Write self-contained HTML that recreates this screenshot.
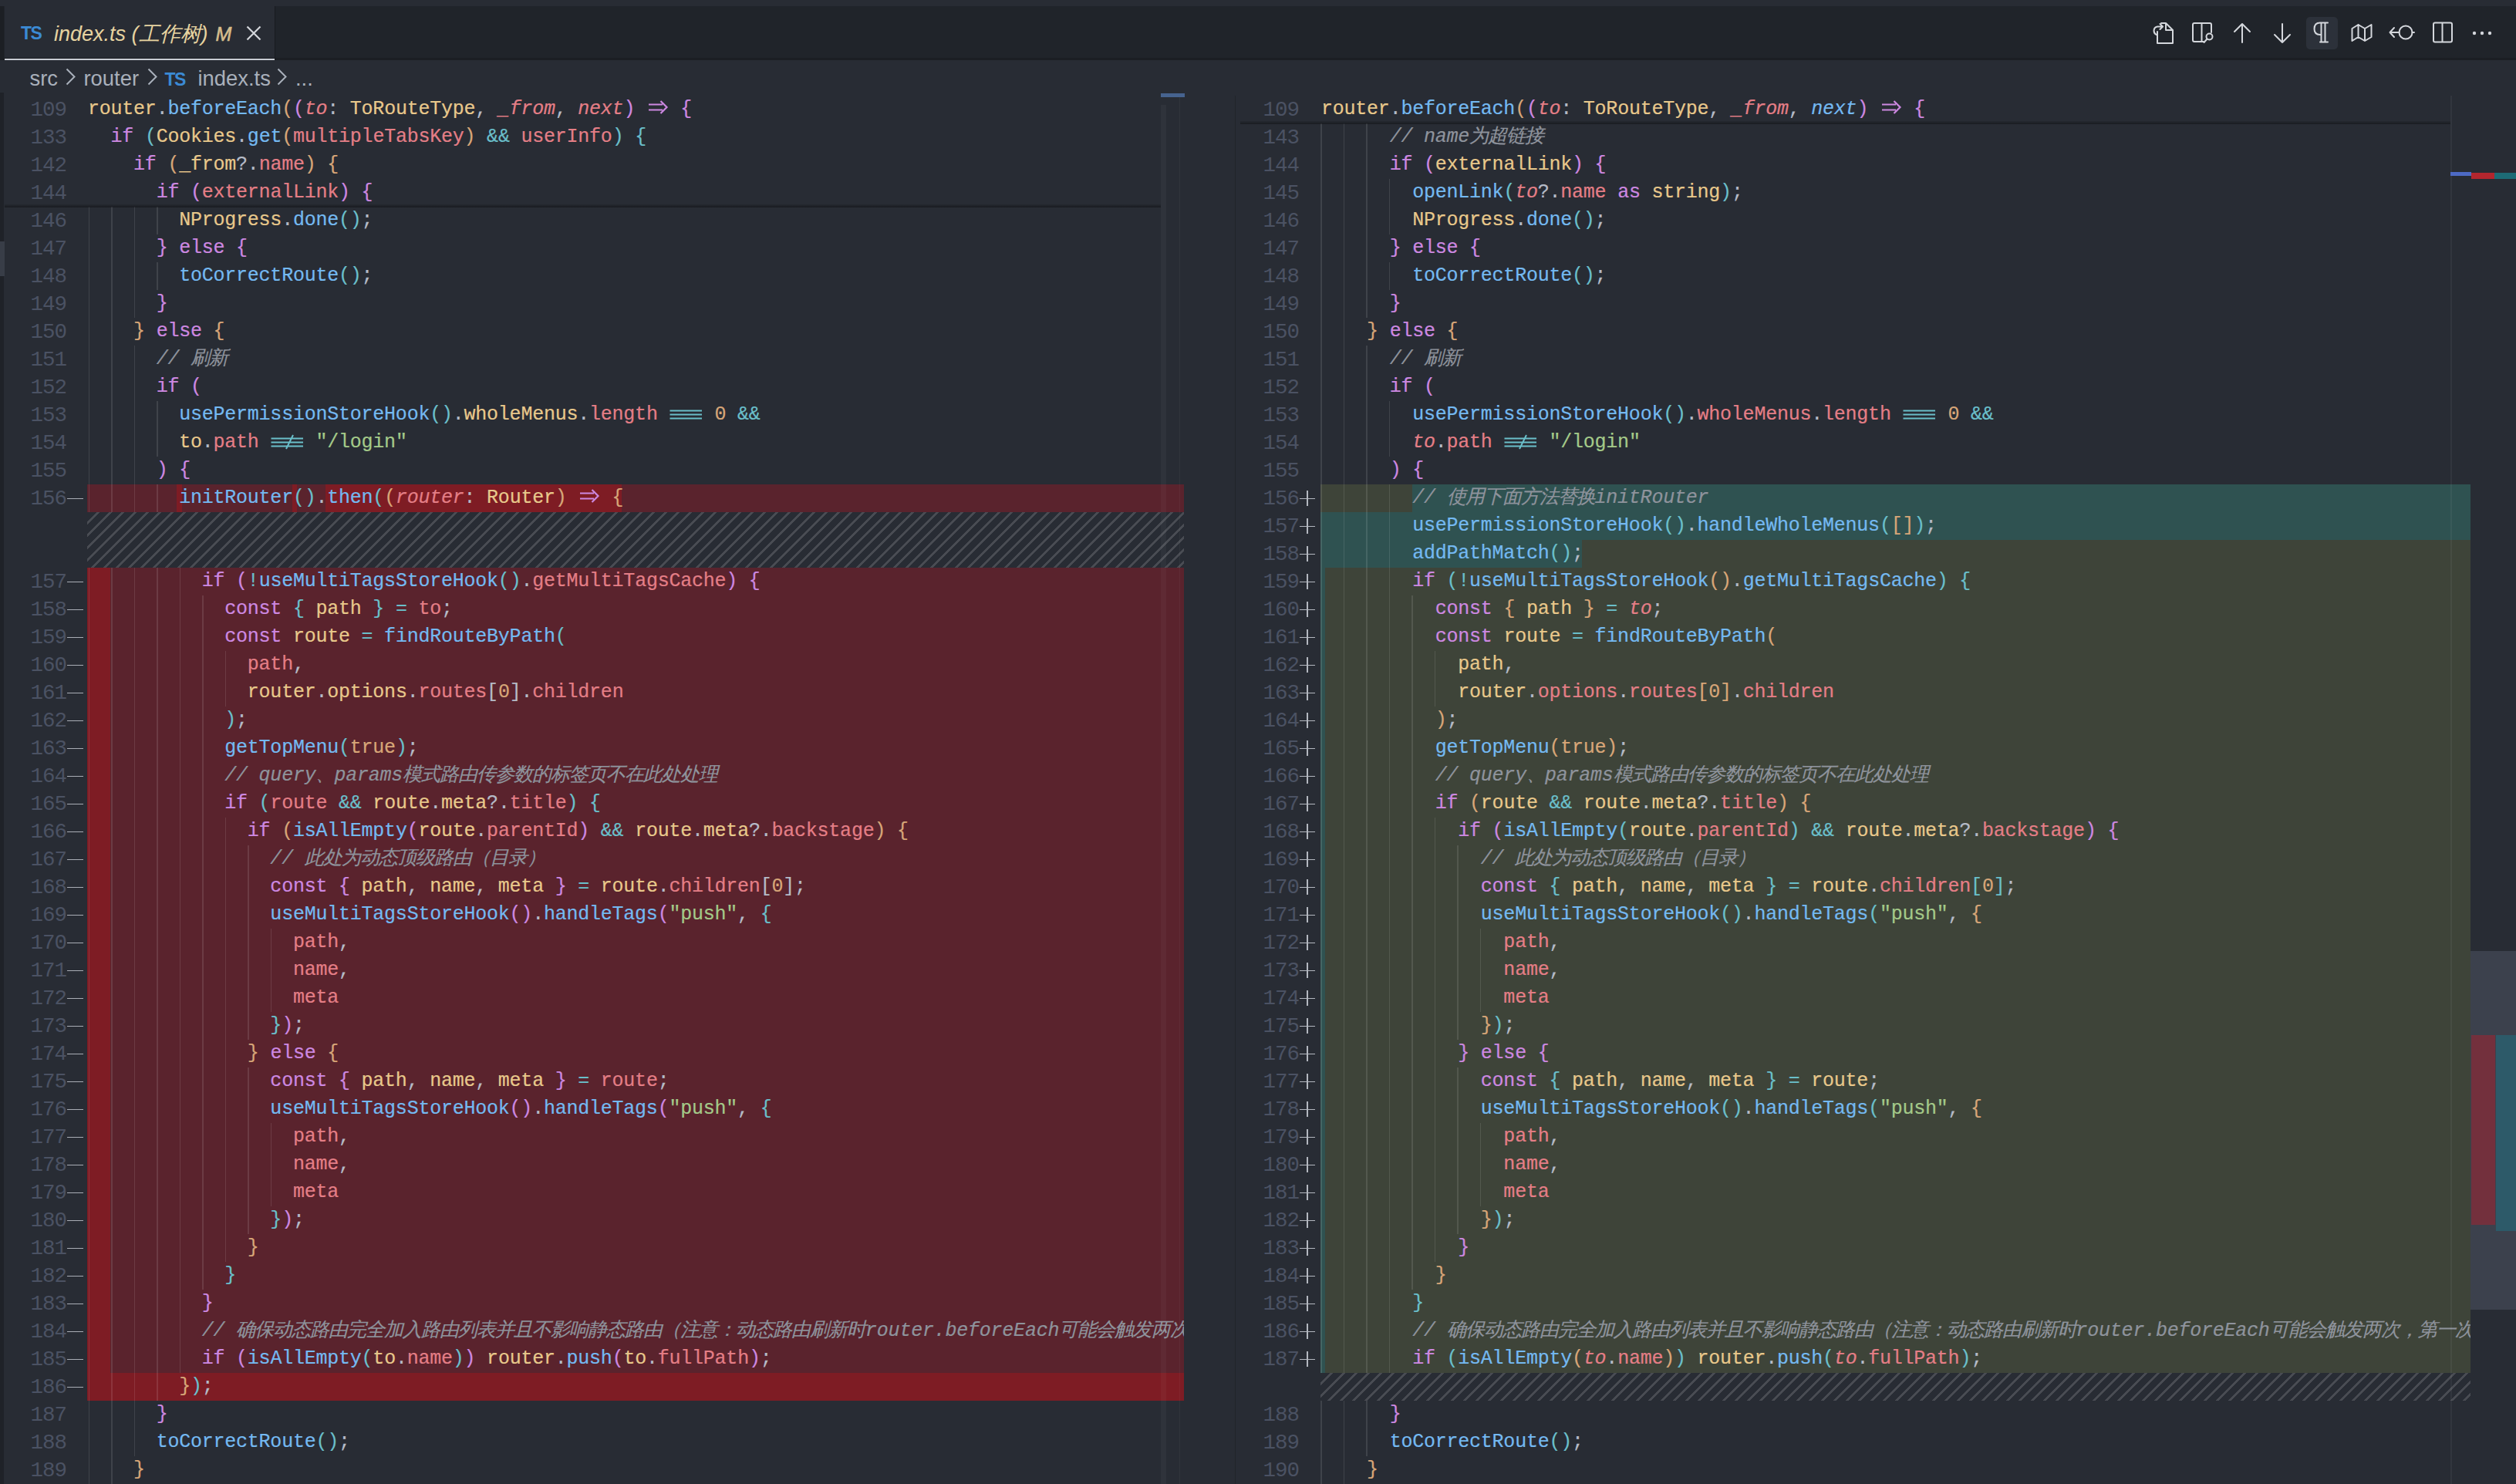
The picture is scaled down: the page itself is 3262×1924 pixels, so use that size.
<!DOCTYPE html><html><head><meta charset="utf-8"><style>
*{margin:0;padding:0;box-sizing:border-box}
html,body{width:3262px;height:1924px;overflow:hidden;background:#282c34}
body{position:relative;font-family:"Liberation Sans",sans-serif}
.abs{position:absolute}
.row{position:absolute;height:36px;line-height:32.7px;white-space:pre;overflow:hidden;font-family:"Liberation Mono",monospace;font-size:25px;letter-spacing:-0.230px;color:#b5bbc7}
.ln{position:absolute;height:36px;line-height:38px;white-space:pre;font-family:"Liberation Mono",monospace;font-size:25px;color:#495162;text-align:right}
.k{color:#cd88e1}.b{color:#74b9f1}.y{color:#e8c88b}.r{color:#e47e86}.i{color:#e47e86;font-style:italic}
.o{color:#d7a678}.c{color:#6abfca}.g{color:#a4ca89}.w{color:#b5bbc7}.m{color:#8e939c;font-style:italic}.n{color:#74b9f1;font-style:italic}.z{letter-spacing:-1px}.L{display:inline-block;width:29.54px;letter-spacing:0;text-align:center}
.hatch{background-color:#282c34;background-image:linear-gradient(-45deg,rgba(204,204,204,.2) 11%,transparent 11%,transparent 50%,rgba(204,204,204,.2) 50%,rgba(204,204,204,.2) 61%,transparent 61%,transparent 100%);background-size:16px 16px}
.guide{position:absolute;width:2px;background:#363b43}

.row{line-height:35.5px;-webkit-text-stroke:0.2px currentColor}
.ln{line-height:38px;font-size:27.5px;letter-spacing:-1px;color:#4b5263}
.guide{background:rgba(255,255,255,0.11);width:1.5px}
.tabt{position:absolute;white-space:pre;font-family:"Liberation Sans",sans-serif;font-size:27px;line-height:36px}
</style></head><body>
<div class="abs" style="left:0px;top:0px;width:3262px;height:8px;background:#282c34;"></div>
<div class="abs" style="left:0px;top:8px;width:3262px;height:70px;background:#20242a;"></div>
<div class="abs" style="left:0px;top:75px;width:3262px;height:3px;background:#1b1e23;"></div>
<div class="abs" style="left:6px;top:8px;width:350px;height:67px;background:#282c34;"></div>
<div class="abs" style="left:356px;top:8px;width:1px;height:70px;background:#181a1f;"></div>
<div class="abs" style="left:6px;top:76px;width:350px;height:2px;background:#c8ccd3;"></div>
<div class="tabt" style="left:27px;top:25px;font-weight:bold;font-size:23px;color:#3b8ad4;letter-spacing:-1.5px">TS</div>
<div class="tabt" style="left:70px;top:26px;font-style:italic;color:#e6d3a0">index.ts (工作树)</div>
<div class="tabt" style="left:279.5px;top:25.5px;font-style:italic;color:#d5bd8c;font-size:25px;-webkit-text-stroke:0.6px currentColor">M</div>
<svg class="abs" style="left:318px;top:32px" width="22" height="22" viewBox="0 0 22 22"><path d="M2.5 2.5 L19.5 19.5 M19.5 2.5 L2.5 19.5" stroke="#d4d7dc" stroke-width="2.2"/></svg>
<svg class="abs" style="left:0;top:0" width="3262" height="80" viewBox="0 0 3262 80"><rect x="2990" y="22" width="41" height="42" rx="5" fill="#2c313a"/><path d="M2802 30 H2808 L2817 39 V56 H2797 V41 M2808 30 V39 H2817" fill="none" stroke="#d4d7dc" stroke-width="2" stroke-linecap="round" stroke-linejoin="round"/><path d="M2796 45 C2791.5 43.5 2791 35.5 2797 34.5 H2803.5 M2800.5 31 L2804 34.5 L2800.5 38" fill="none" stroke="#d4d7dc" stroke-width="2" stroke-linecap="round" stroke-linejoin="round"/><path d="M2857 54 H2845 Q2843 54 2843 52 V32 Q2843 30 2845 30 H2865 Q2867 30 2867 32 V42 M2854.5 30 V54" fill="none" stroke="#d4d7dc" stroke-width="2" stroke-linecap="round" stroke-linejoin="round"/><circle cx="2864.5" cy="47.5" r="4" fill="none" stroke="#d4d7dc" stroke-width="2" stroke-linecap="round" stroke-linejoin="round"/><path d="M2861.5 50.5 L2857.5 55" fill="none" stroke="#d4d7dc" stroke-width="2" stroke-linecap="round" stroke-linejoin="round"/><path d="M2907 31 V55 M2897 41 L2907 31 L2917 41" fill="none" stroke="#d4d7dc" stroke-width="2" stroke-linecap="round" stroke-linejoin="round"/><path d="M2959 31 V55 M2949 45 L2959 55 L2969 45" fill="none" stroke="#d4d7dc" stroke-width="2" stroke-linecap="round" stroke-linejoin="round"/><path d="M3018 29.5 H3008 C3002 29.5 3000.5 33 3000.5 37.5 C3000.5 42 3003 45 3008 45 M3009.5 29.5 V54.5 M3014.5 29.5 V54.5 M3008 54.5 H3018" fill="none" stroke="#d4d7dc" stroke-width="2" stroke-linecap="round" stroke-linejoin="round"/><path d="M3049.5 37 L3057.5 32 L3066 37 L3074.5 32 V48 L3066 53 L3057.5 48 L3049.5 53 Z M3057.5 32 V48 M3066 37 V53" fill="none" stroke="#d4d7dc" stroke-width="2" stroke-linecap="round" stroke-linejoin="round"/><circle cx="3119" cy="42" r="8.5" fill="none" stroke="#d4d7dc" stroke-width="2" stroke-linecap="round" stroke-linejoin="round"/><path d="M3110.5 42 H3098.5 M3104 36 L3098.5 42 L3104 48 M3127.5 42 H3130" fill="none" stroke="#d4d7dc" stroke-width="2" stroke-linecap="round" stroke-linejoin="round"/><path d="M3157 29.5 H3177 Q3179 29.5 3179 31.5 V52.5 Q3179 54.5 3177 54.5 H3157 Q3155 54.5 3155 52.5 V31.5 Q3155 29.5 3157 29.5 Z M3166.5 29.5 V54.5" fill="none" stroke="#d4d7dc" stroke-width="2" stroke-linecap="round" stroke-linejoin="round"/><circle cx="3208" cy="43" r="2.2" fill="#d4d7dc"/><circle cx="3218" cy="43" r="2.2" fill="#d4d7dc"/><circle cx="3228" cy="43" r="2.2" fill="#d4d7dc"/></svg>
<div class="tabt" style="left:38.5px;top:83.5px;color:#a9b0bb;font-size:27.4px">src</div>
<svg class="abs" style="left:85px;top:88px" width="14" height="24" viewBox="0 0 14 24"><path d="M1.5 1.5 L11.5 11.5 L1.5 21.5" fill="none" stroke="#a9b0bb" stroke-width="2"/></svg>
<div class="tabt" style="left:108.5px;top:83.5px;color:#a9b0bb;font-size:27.4px">router</div>
<svg class="abs" style="left:191px;top:88px" width="14" height="24" viewBox="0 0 14 24"><path d="M1.5 1.5 L11.5 11.5 L1.5 21.5" fill="none" stroke="#a9b0bb" stroke-width="2"/></svg>
<div class="tabt" style="left:213.5px;top:84.5px;font-weight:bold;font-size:23px;color:#3b8ad4;letter-spacing:-1.5px">TS</div>
<div class="tabt" style="left:256.5px;top:83.5px;color:#a9b0bb;font-size:27.4px">index.ts</div>
<svg class="abs" style="left:359px;top:88px" width="14" height="24" viewBox="0 0 14 24"><path d="M1.5 1.5 L11.5 11.5 L1.5 21.5" fill="none" stroke="#a9b0bb" stroke-width="2"/></svg>
<div class="tabt" style="left:383px;top:83.5px;color:#a9b0bb;font-size:27.4px">...</div>
<div class="abs" style="left:0px;top:8px;width:5px;height:67px;background:#1c1f24;"></div>
<div class="abs" style="left:0px;top:120px;width:5px;height:1804px;background:#1f2228;"></div>
<div class="abs" style="left:0px;top:313px;width:6px;height:45px;background:#383d47;"></div>
<div class="abs" style="left:113px;top:628px;width:1422px;height:36px;background:#5a232d;"></div>
<div class="abs" style="left:229px;top:628px;width:7px;height:36px;background:#7e1c24;"></div>
<div class="abs" style="left:379px;top:628px;width:6px;height:36px;background:#7e1c24;"></div>
<div class="abs" style="left:422px;top:628px;width:384px;height:36px;background:#7e1c24;"></div>
<div class="abs" style="left:113px;top:736px;width:1422px;height:36px;background:#5a232d;"></div>
<div class="abs" style="left:113px;top:736px;width:30px;height:36px;background:#7e1c24;"></div>
<div class="abs" style="left:113px;top:772px;width:1422px;height:36px;background:#5a232d;"></div>
<div class="abs" style="left:113px;top:772px;width:30px;height:36px;background:#7e1c24;"></div>
<div class="abs" style="left:113px;top:808px;width:1422px;height:36px;background:#5a232d;"></div>
<div class="abs" style="left:113px;top:808px;width:30px;height:36px;background:#7e1c24;"></div>
<div class="abs" style="left:113px;top:844px;width:1422px;height:36px;background:#5a232d;"></div>
<div class="abs" style="left:113px;top:844px;width:30px;height:36px;background:#7e1c24;"></div>
<div class="abs" style="left:113px;top:880px;width:1422px;height:36px;background:#5a232d;"></div>
<div class="abs" style="left:113px;top:880px;width:30px;height:36px;background:#7e1c24;"></div>
<div class="abs" style="left:113px;top:916px;width:1422px;height:36px;background:#5a232d;"></div>
<div class="abs" style="left:113px;top:916px;width:30px;height:36px;background:#7e1c24;"></div>
<div class="abs" style="left:113px;top:952px;width:1422px;height:36px;background:#5a232d;"></div>
<div class="abs" style="left:113px;top:952px;width:30px;height:36px;background:#7e1c24;"></div>
<div class="abs" style="left:113px;top:988px;width:1422px;height:36px;background:#5a232d;"></div>
<div class="abs" style="left:113px;top:988px;width:30px;height:36px;background:#7e1c24;"></div>
<div class="abs" style="left:113px;top:1024px;width:1422px;height:36px;background:#5a232d;"></div>
<div class="abs" style="left:113px;top:1024px;width:30px;height:36px;background:#7e1c24;"></div>
<div class="abs" style="left:113px;top:1060px;width:1422px;height:36px;background:#5a232d;"></div>
<div class="abs" style="left:113px;top:1060px;width:30px;height:36px;background:#7e1c24;"></div>
<div class="abs" style="left:113px;top:1096px;width:1422px;height:36px;background:#5a232d;"></div>
<div class="abs" style="left:113px;top:1096px;width:30px;height:36px;background:#7e1c24;"></div>
<div class="abs" style="left:113px;top:1132px;width:1422px;height:36px;background:#5a232d;"></div>
<div class="abs" style="left:113px;top:1132px;width:30px;height:36px;background:#7e1c24;"></div>
<div class="abs" style="left:113px;top:1168px;width:1422px;height:36px;background:#5a232d;"></div>
<div class="abs" style="left:113px;top:1168px;width:30px;height:36px;background:#7e1c24;"></div>
<div class="abs" style="left:113px;top:1204px;width:1422px;height:36px;background:#5a232d;"></div>
<div class="abs" style="left:113px;top:1204px;width:30px;height:36px;background:#7e1c24;"></div>
<div class="abs" style="left:113px;top:1240px;width:1422px;height:36px;background:#5a232d;"></div>
<div class="abs" style="left:113px;top:1240px;width:30px;height:36px;background:#7e1c24;"></div>
<div class="abs" style="left:113px;top:1276px;width:1422px;height:36px;background:#5a232d;"></div>
<div class="abs" style="left:113px;top:1276px;width:30px;height:36px;background:#7e1c24;"></div>
<div class="abs" style="left:113px;top:1312px;width:1422px;height:36px;background:#5a232d;"></div>
<div class="abs" style="left:113px;top:1312px;width:30px;height:36px;background:#7e1c24;"></div>
<div class="abs" style="left:113px;top:1348px;width:1422px;height:36px;background:#5a232d;"></div>
<div class="abs" style="left:113px;top:1348px;width:30px;height:36px;background:#7e1c24;"></div>
<div class="abs" style="left:113px;top:1384px;width:1422px;height:36px;background:#5a232d;"></div>
<div class="abs" style="left:113px;top:1384px;width:30px;height:36px;background:#7e1c24;"></div>
<div class="abs" style="left:113px;top:1420px;width:1422px;height:36px;background:#5a232d;"></div>
<div class="abs" style="left:113px;top:1420px;width:30px;height:36px;background:#7e1c24;"></div>
<div class="abs" style="left:113px;top:1456px;width:1422px;height:36px;background:#5a232d;"></div>
<div class="abs" style="left:113px;top:1456px;width:30px;height:36px;background:#7e1c24;"></div>
<div class="abs" style="left:113px;top:1492px;width:1422px;height:36px;background:#5a232d;"></div>
<div class="abs" style="left:113px;top:1492px;width:30px;height:36px;background:#7e1c24;"></div>
<div class="abs" style="left:113px;top:1528px;width:1422px;height:36px;background:#5a232d;"></div>
<div class="abs" style="left:113px;top:1528px;width:30px;height:36px;background:#7e1c24;"></div>
<div class="abs" style="left:113px;top:1564px;width:1422px;height:36px;background:#5a232d;"></div>
<div class="abs" style="left:113px;top:1564px;width:30px;height:36px;background:#7e1c24;"></div>
<div class="abs" style="left:113px;top:1600px;width:1422px;height:36px;background:#5a232d;"></div>
<div class="abs" style="left:113px;top:1600px;width:30px;height:36px;background:#7e1c24;"></div>
<div class="abs" style="left:113px;top:1636px;width:1422px;height:36px;background:#5a232d;"></div>
<div class="abs" style="left:113px;top:1636px;width:30px;height:36px;background:#7e1c24;"></div>
<div class="abs" style="left:113px;top:1672px;width:1422px;height:36px;background:#5a232d;"></div>
<div class="abs" style="left:113px;top:1672px;width:30px;height:36px;background:#7e1c24;"></div>
<div class="abs" style="left:113px;top:1708px;width:1422px;height:36px;background:#5a232d;"></div>
<div class="abs" style="left:113px;top:1708px;width:30px;height:36px;background:#7e1c24;"></div>
<div class="abs" style="left:113px;top:1744px;width:1422px;height:36px;background:#5a232d;"></div>
<div class="abs" style="left:113px;top:1744px;width:30px;height:36px;background:#7e1c24;"></div>
<div class="abs" style="left:113px;top:1780px;width:1422px;height:36px;background:#5a232d;"></div>
<div class="abs" style="left:113px;top:1780px;width:1422px;height:36px;background:#7e1c24;"></div>
<div class="abs hatch" style="left:113px;top:664px;width:1422px;height:72px"></div>
<div class="guide" style="left:114.5px;top:268px;height:36px"></div>
<div class="guide" style="left:144.0px;top:268px;height:36px"></div>
<div class="guide" style="left:173.6px;top:268px;height:36px"></div>
<div class="guide" style="left:203.1px;top:268px;height:36px"></div>
<div class="guide" style="left:114.5px;top:304px;height:36px"></div>
<div class="guide" style="left:144.0px;top:304px;height:36px"></div>
<div class="guide" style="left:173.6px;top:304px;height:36px"></div>
<div class="guide" style="left:114.5px;top:340px;height:36px"></div>
<div class="guide" style="left:144.0px;top:340px;height:36px"></div>
<div class="guide" style="left:173.6px;top:340px;height:36px"></div>
<div class="guide" style="left:203.1px;top:340px;height:36px"></div>
<div class="guide" style="left:114.5px;top:376px;height:36px"></div>
<div class="guide" style="left:144.0px;top:376px;height:36px"></div>
<div class="guide" style="left:173.6px;top:376px;height:36px"></div>
<div class="guide" style="left:114.5px;top:412px;height:36px"></div>
<div class="guide" style="left:144.0px;top:412px;height:36px"></div>
<div class="guide" style="left:114.5px;top:448px;height:36px"></div>
<div class="guide" style="left:144.0px;top:448px;height:36px"></div>
<div class="guide" style="left:173.6px;top:448px;height:36px"></div>
<div class="guide" style="left:114.5px;top:484px;height:36px"></div>
<div class="guide" style="left:144.0px;top:484px;height:36px"></div>
<div class="guide" style="left:173.6px;top:484px;height:36px"></div>
<div class="guide" style="left:114.5px;top:520px;height:36px"></div>
<div class="guide" style="left:144.0px;top:520px;height:36px"></div>
<div class="guide" style="left:173.6px;top:520px;height:36px"></div>
<div class="guide" style="left:203.1px;top:520px;height:36px"></div>
<div class="guide" style="left:114.5px;top:556px;height:36px"></div>
<div class="guide" style="left:144.0px;top:556px;height:36px"></div>
<div class="guide" style="left:173.6px;top:556px;height:36px"></div>
<div class="guide" style="left:203.1px;top:556px;height:36px"></div>
<div class="guide" style="left:114.5px;top:592px;height:36px"></div>
<div class="guide" style="left:144.0px;top:592px;height:36px"></div>
<div class="guide" style="left:173.6px;top:592px;height:36px"></div>
<div class="guide" style="left:114.5px;top:628px;height:36px"></div>
<div class="guide" style="left:144.0px;top:628px;height:36px"></div>
<div class="guide" style="left:173.6px;top:628px;height:36px"></div>
<div class="guide" style="left:203.1px;top:628px;height:36px"></div>
<div class="guide" style="left:114.5px;top:736px;height:36px"></div>
<div class="guide" style="left:144.0px;top:736px;height:36px"></div>
<div class="guide" style="left:173.6px;top:736px;height:36px"></div>
<div class="guide" style="left:203.1px;top:736px;height:36px"></div>
<div class="guide" style="left:232.7px;top:736px;height:36px"></div>
<div class="guide" style="left:114.5px;top:772px;height:36px"></div>
<div class="guide" style="left:144.0px;top:772px;height:36px"></div>
<div class="guide" style="left:173.6px;top:772px;height:36px"></div>
<div class="guide" style="left:203.1px;top:772px;height:36px"></div>
<div class="guide" style="left:232.7px;top:772px;height:36px"></div>
<div class="guide" style="left:262.2px;top:772px;height:36px"></div>
<div class="guide" style="left:114.5px;top:808px;height:36px"></div>
<div class="guide" style="left:144.0px;top:808px;height:36px"></div>
<div class="guide" style="left:173.6px;top:808px;height:36px"></div>
<div class="guide" style="left:203.1px;top:808px;height:36px"></div>
<div class="guide" style="left:232.7px;top:808px;height:36px"></div>
<div class="guide" style="left:262.2px;top:808px;height:36px"></div>
<div class="guide" style="left:114.5px;top:844px;height:36px"></div>
<div class="guide" style="left:144.0px;top:844px;height:36px"></div>
<div class="guide" style="left:173.6px;top:844px;height:36px"></div>
<div class="guide" style="left:203.1px;top:844px;height:36px"></div>
<div class="guide" style="left:232.7px;top:844px;height:36px"></div>
<div class="guide" style="left:262.2px;top:844px;height:36px"></div>
<div class="guide" style="left:291.7px;top:844px;height:36px"></div>
<div class="guide" style="left:114.5px;top:880px;height:36px"></div>
<div class="guide" style="left:144.0px;top:880px;height:36px"></div>
<div class="guide" style="left:173.6px;top:880px;height:36px"></div>
<div class="guide" style="left:203.1px;top:880px;height:36px"></div>
<div class="guide" style="left:232.7px;top:880px;height:36px"></div>
<div class="guide" style="left:262.2px;top:880px;height:36px"></div>
<div class="guide" style="left:291.7px;top:880px;height:36px"></div>
<div class="guide" style="left:114.5px;top:916px;height:36px"></div>
<div class="guide" style="left:144.0px;top:916px;height:36px"></div>
<div class="guide" style="left:173.6px;top:916px;height:36px"></div>
<div class="guide" style="left:203.1px;top:916px;height:36px"></div>
<div class="guide" style="left:232.7px;top:916px;height:36px"></div>
<div class="guide" style="left:262.2px;top:916px;height:36px"></div>
<div class="guide" style="left:114.5px;top:952px;height:36px"></div>
<div class="guide" style="left:144.0px;top:952px;height:36px"></div>
<div class="guide" style="left:173.6px;top:952px;height:36px"></div>
<div class="guide" style="left:203.1px;top:952px;height:36px"></div>
<div class="guide" style="left:232.7px;top:952px;height:36px"></div>
<div class="guide" style="left:262.2px;top:952px;height:36px"></div>
<div class="guide" style="left:114.5px;top:988px;height:36px"></div>
<div class="guide" style="left:144.0px;top:988px;height:36px"></div>
<div class="guide" style="left:173.6px;top:988px;height:36px"></div>
<div class="guide" style="left:203.1px;top:988px;height:36px"></div>
<div class="guide" style="left:232.7px;top:988px;height:36px"></div>
<div class="guide" style="left:262.2px;top:988px;height:36px"></div>
<div class="guide" style="left:114.5px;top:1024px;height:36px"></div>
<div class="guide" style="left:144.0px;top:1024px;height:36px"></div>
<div class="guide" style="left:173.6px;top:1024px;height:36px"></div>
<div class="guide" style="left:203.1px;top:1024px;height:36px"></div>
<div class="guide" style="left:232.7px;top:1024px;height:36px"></div>
<div class="guide" style="left:262.2px;top:1024px;height:36px"></div>
<div class="guide" style="left:114.5px;top:1060px;height:36px"></div>
<div class="guide" style="left:144.0px;top:1060px;height:36px"></div>
<div class="guide" style="left:173.6px;top:1060px;height:36px"></div>
<div class="guide" style="left:203.1px;top:1060px;height:36px"></div>
<div class="guide" style="left:232.7px;top:1060px;height:36px"></div>
<div class="guide" style="left:262.2px;top:1060px;height:36px"></div>
<div class="guide" style="left:291.7px;top:1060px;height:36px"></div>
<div class="guide" style="left:114.5px;top:1096px;height:36px"></div>
<div class="guide" style="left:144.0px;top:1096px;height:36px"></div>
<div class="guide" style="left:173.6px;top:1096px;height:36px"></div>
<div class="guide" style="left:203.1px;top:1096px;height:36px"></div>
<div class="guide" style="left:232.7px;top:1096px;height:36px"></div>
<div class="guide" style="left:262.2px;top:1096px;height:36px"></div>
<div class="guide" style="left:291.7px;top:1096px;height:36px"></div>
<div class="guide" style="left:321.3px;top:1096px;height:36px"></div>
<div class="guide" style="left:114.5px;top:1132px;height:36px"></div>
<div class="guide" style="left:144.0px;top:1132px;height:36px"></div>
<div class="guide" style="left:173.6px;top:1132px;height:36px"></div>
<div class="guide" style="left:203.1px;top:1132px;height:36px"></div>
<div class="guide" style="left:232.7px;top:1132px;height:36px"></div>
<div class="guide" style="left:262.2px;top:1132px;height:36px"></div>
<div class="guide" style="left:291.7px;top:1132px;height:36px"></div>
<div class="guide" style="left:321.3px;top:1132px;height:36px"></div>
<div class="guide" style="left:114.5px;top:1168px;height:36px"></div>
<div class="guide" style="left:144.0px;top:1168px;height:36px"></div>
<div class="guide" style="left:173.6px;top:1168px;height:36px"></div>
<div class="guide" style="left:203.1px;top:1168px;height:36px"></div>
<div class="guide" style="left:232.7px;top:1168px;height:36px"></div>
<div class="guide" style="left:262.2px;top:1168px;height:36px"></div>
<div class="guide" style="left:291.7px;top:1168px;height:36px"></div>
<div class="guide" style="left:321.3px;top:1168px;height:36px"></div>
<div class="guide" style="left:114.5px;top:1204px;height:36px"></div>
<div class="guide" style="left:144.0px;top:1204px;height:36px"></div>
<div class="guide" style="left:173.6px;top:1204px;height:36px"></div>
<div class="guide" style="left:203.1px;top:1204px;height:36px"></div>
<div class="guide" style="left:232.7px;top:1204px;height:36px"></div>
<div class="guide" style="left:262.2px;top:1204px;height:36px"></div>
<div class="guide" style="left:291.7px;top:1204px;height:36px"></div>
<div class="guide" style="left:321.3px;top:1204px;height:36px"></div>
<div class="guide" style="left:350.8px;top:1204px;height:36px"></div>
<div class="guide" style="left:114.5px;top:1240px;height:36px"></div>
<div class="guide" style="left:144.0px;top:1240px;height:36px"></div>
<div class="guide" style="left:173.6px;top:1240px;height:36px"></div>
<div class="guide" style="left:203.1px;top:1240px;height:36px"></div>
<div class="guide" style="left:232.7px;top:1240px;height:36px"></div>
<div class="guide" style="left:262.2px;top:1240px;height:36px"></div>
<div class="guide" style="left:291.7px;top:1240px;height:36px"></div>
<div class="guide" style="left:321.3px;top:1240px;height:36px"></div>
<div class="guide" style="left:350.8px;top:1240px;height:36px"></div>
<div class="guide" style="left:114.5px;top:1276px;height:36px"></div>
<div class="guide" style="left:144.0px;top:1276px;height:36px"></div>
<div class="guide" style="left:173.6px;top:1276px;height:36px"></div>
<div class="guide" style="left:203.1px;top:1276px;height:36px"></div>
<div class="guide" style="left:232.7px;top:1276px;height:36px"></div>
<div class="guide" style="left:262.2px;top:1276px;height:36px"></div>
<div class="guide" style="left:291.7px;top:1276px;height:36px"></div>
<div class="guide" style="left:321.3px;top:1276px;height:36px"></div>
<div class="guide" style="left:350.8px;top:1276px;height:36px"></div>
<div class="guide" style="left:114.5px;top:1312px;height:36px"></div>
<div class="guide" style="left:144.0px;top:1312px;height:36px"></div>
<div class="guide" style="left:173.6px;top:1312px;height:36px"></div>
<div class="guide" style="left:203.1px;top:1312px;height:36px"></div>
<div class="guide" style="left:232.7px;top:1312px;height:36px"></div>
<div class="guide" style="left:262.2px;top:1312px;height:36px"></div>
<div class="guide" style="left:291.7px;top:1312px;height:36px"></div>
<div class="guide" style="left:321.3px;top:1312px;height:36px"></div>
<div class="guide" style="left:114.5px;top:1348px;height:36px"></div>
<div class="guide" style="left:144.0px;top:1348px;height:36px"></div>
<div class="guide" style="left:173.6px;top:1348px;height:36px"></div>
<div class="guide" style="left:203.1px;top:1348px;height:36px"></div>
<div class="guide" style="left:232.7px;top:1348px;height:36px"></div>
<div class="guide" style="left:262.2px;top:1348px;height:36px"></div>
<div class="guide" style="left:291.7px;top:1348px;height:36px"></div>
<div class="guide" style="left:114.5px;top:1384px;height:36px"></div>
<div class="guide" style="left:144.0px;top:1384px;height:36px"></div>
<div class="guide" style="left:173.6px;top:1384px;height:36px"></div>
<div class="guide" style="left:203.1px;top:1384px;height:36px"></div>
<div class="guide" style="left:232.7px;top:1384px;height:36px"></div>
<div class="guide" style="left:262.2px;top:1384px;height:36px"></div>
<div class="guide" style="left:291.7px;top:1384px;height:36px"></div>
<div class="guide" style="left:321.3px;top:1384px;height:36px"></div>
<div class="guide" style="left:114.5px;top:1420px;height:36px"></div>
<div class="guide" style="left:144.0px;top:1420px;height:36px"></div>
<div class="guide" style="left:173.6px;top:1420px;height:36px"></div>
<div class="guide" style="left:203.1px;top:1420px;height:36px"></div>
<div class="guide" style="left:232.7px;top:1420px;height:36px"></div>
<div class="guide" style="left:262.2px;top:1420px;height:36px"></div>
<div class="guide" style="left:291.7px;top:1420px;height:36px"></div>
<div class="guide" style="left:321.3px;top:1420px;height:36px"></div>
<div class="guide" style="left:114.5px;top:1456px;height:36px"></div>
<div class="guide" style="left:144.0px;top:1456px;height:36px"></div>
<div class="guide" style="left:173.6px;top:1456px;height:36px"></div>
<div class="guide" style="left:203.1px;top:1456px;height:36px"></div>
<div class="guide" style="left:232.7px;top:1456px;height:36px"></div>
<div class="guide" style="left:262.2px;top:1456px;height:36px"></div>
<div class="guide" style="left:291.7px;top:1456px;height:36px"></div>
<div class="guide" style="left:321.3px;top:1456px;height:36px"></div>
<div class="guide" style="left:350.8px;top:1456px;height:36px"></div>
<div class="guide" style="left:114.5px;top:1492px;height:36px"></div>
<div class="guide" style="left:144.0px;top:1492px;height:36px"></div>
<div class="guide" style="left:173.6px;top:1492px;height:36px"></div>
<div class="guide" style="left:203.1px;top:1492px;height:36px"></div>
<div class="guide" style="left:232.7px;top:1492px;height:36px"></div>
<div class="guide" style="left:262.2px;top:1492px;height:36px"></div>
<div class="guide" style="left:291.7px;top:1492px;height:36px"></div>
<div class="guide" style="left:321.3px;top:1492px;height:36px"></div>
<div class="guide" style="left:350.8px;top:1492px;height:36px"></div>
<div class="guide" style="left:114.5px;top:1528px;height:36px"></div>
<div class="guide" style="left:144.0px;top:1528px;height:36px"></div>
<div class="guide" style="left:173.6px;top:1528px;height:36px"></div>
<div class="guide" style="left:203.1px;top:1528px;height:36px"></div>
<div class="guide" style="left:232.7px;top:1528px;height:36px"></div>
<div class="guide" style="left:262.2px;top:1528px;height:36px"></div>
<div class="guide" style="left:291.7px;top:1528px;height:36px"></div>
<div class="guide" style="left:321.3px;top:1528px;height:36px"></div>
<div class="guide" style="left:350.8px;top:1528px;height:36px"></div>
<div class="guide" style="left:114.5px;top:1564px;height:36px"></div>
<div class="guide" style="left:144.0px;top:1564px;height:36px"></div>
<div class="guide" style="left:173.6px;top:1564px;height:36px"></div>
<div class="guide" style="left:203.1px;top:1564px;height:36px"></div>
<div class="guide" style="left:232.7px;top:1564px;height:36px"></div>
<div class="guide" style="left:262.2px;top:1564px;height:36px"></div>
<div class="guide" style="left:291.7px;top:1564px;height:36px"></div>
<div class="guide" style="left:321.3px;top:1564px;height:36px"></div>
<div class="guide" style="left:114.5px;top:1600px;height:36px"></div>
<div class="guide" style="left:144.0px;top:1600px;height:36px"></div>
<div class="guide" style="left:173.6px;top:1600px;height:36px"></div>
<div class="guide" style="left:203.1px;top:1600px;height:36px"></div>
<div class="guide" style="left:232.7px;top:1600px;height:36px"></div>
<div class="guide" style="left:262.2px;top:1600px;height:36px"></div>
<div class="guide" style="left:291.7px;top:1600px;height:36px"></div>
<div class="guide" style="left:114.5px;top:1636px;height:36px"></div>
<div class="guide" style="left:144.0px;top:1636px;height:36px"></div>
<div class="guide" style="left:173.6px;top:1636px;height:36px"></div>
<div class="guide" style="left:203.1px;top:1636px;height:36px"></div>
<div class="guide" style="left:232.7px;top:1636px;height:36px"></div>
<div class="guide" style="left:262.2px;top:1636px;height:36px"></div>
<div class="guide" style="left:114.5px;top:1672px;height:36px"></div>
<div class="guide" style="left:144.0px;top:1672px;height:36px"></div>
<div class="guide" style="left:173.6px;top:1672px;height:36px"></div>
<div class="guide" style="left:203.1px;top:1672px;height:36px"></div>
<div class="guide" style="left:232.7px;top:1672px;height:36px"></div>
<div class="guide" style="left:114.5px;top:1708px;height:36px"></div>
<div class="guide" style="left:144.0px;top:1708px;height:36px"></div>
<div class="guide" style="left:173.6px;top:1708px;height:36px"></div>
<div class="guide" style="left:203.1px;top:1708px;height:36px"></div>
<div class="guide" style="left:232.7px;top:1708px;height:36px"></div>
<div class="guide" style="left:114.5px;top:1744px;height:36px"></div>
<div class="guide" style="left:144.0px;top:1744px;height:36px"></div>
<div class="guide" style="left:173.6px;top:1744px;height:36px"></div>
<div class="guide" style="left:203.1px;top:1744px;height:36px"></div>
<div class="guide" style="left:232.7px;top:1744px;height:36px"></div>
<div class="guide" style="left:114.5px;top:1780px;height:36px"></div>
<div class="guide" style="left:144.0px;top:1780px;height:36px"></div>
<div class="guide" style="left:173.6px;top:1780px;height:36px"></div>
<div class="guide" style="left:203.1px;top:1780px;height:36px"></div>
<div class="guide" style="left:114.5px;top:1816px;height:36px"></div>
<div class="guide" style="left:144.0px;top:1816px;height:36px"></div>
<div class="guide" style="left:173.6px;top:1816px;height:36px"></div>
<div class="guide" style="left:114.5px;top:1852px;height:36px"></div>
<div class="guide" style="left:144.0px;top:1852px;height:36px"></div>
<div class="guide" style="left:173.6px;top:1852px;height:36px"></div>
<div class="guide" style="left:114.5px;top:1888px;height:36px"></div>
<div class="guide" style="left:144.0px;top:1888px;height:36px"></div>
<div class="ln" style="left:-14px;top:124px;width:100px">109</div>
<div class="ln" style="left:-14px;top:160px;width:100px">133</div>
<div class="ln" style="left:-14px;top:196px;width:100px">142</div>
<div class="ln" style="left:-14px;top:232px;width:100px">144</div>
<div class="ln" style="left:-14px;top:268px;width:100px">146</div>
<div class="ln" style="left:-14px;top:304px;width:100px">147</div>
<div class="ln" style="left:-14px;top:340px;width:100px">148</div>
<div class="ln" style="left:-14px;top:376px;width:100px">149</div>
<div class="ln" style="left:-14px;top:412px;width:100px">150</div>
<div class="ln" style="left:-14px;top:448px;width:100px">151</div>
<div class="ln" style="left:-14px;top:484px;width:100px">152</div>
<div class="ln" style="left:-14px;top:520px;width:100px">153</div>
<div class="ln" style="left:-14px;top:556px;width:100px">154</div>
<div class="ln" style="left:-14px;top:592px;width:100px">155</div>
<div class="ln" style="left:-14px;top:628px;width:100px">156</div>
<div class="abs" style="left:87px;top:645.5px;width:21px;height:1.4px;background:#a9adb5;"></div>
<div class="ln" style="left:-14px;top:736px;width:100px">157</div>
<div class="abs" style="left:87px;top:753.5px;width:21px;height:1.4px;background:#a9adb5;"></div>
<div class="ln" style="left:-14px;top:772px;width:100px">158</div>
<div class="abs" style="left:87px;top:789.5px;width:21px;height:1.4px;background:#a9adb5;"></div>
<div class="ln" style="left:-14px;top:808px;width:100px">159</div>
<div class="abs" style="left:87px;top:825.5px;width:21px;height:1.4px;background:#a9adb5;"></div>
<div class="ln" style="left:-14px;top:844px;width:100px">160</div>
<div class="abs" style="left:87px;top:861.5px;width:21px;height:1.4px;background:#a9adb5;"></div>
<div class="ln" style="left:-14px;top:880px;width:100px">161</div>
<div class="abs" style="left:87px;top:897.5px;width:21px;height:1.4px;background:#a9adb5;"></div>
<div class="ln" style="left:-14px;top:916px;width:100px">162</div>
<div class="abs" style="left:87px;top:933.5px;width:21px;height:1.4px;background:#a9adb5;"></div>
<div class="ln" style="left:-14px;top:952px;width:100px">163</div>
<div class="abs" style="left:87px;top:969.5px;width:21px;height:1.4px;background:#a9adb5;"></div>
<div class="ln" style="left:-14px;top:988px;width:100px">164</div>
<div class="abs" style="left:87px;top:1005.5px;width:21px;height:1.4px;background:#a9adb5;"></div>
<div class="ln" style="left:-14px;top:1024px;width:100px">165</div>
<div class="abs" style="left:87px;top:1041.5px;width:21px;height:1.4px;background:#a9adb5;"></div>
<div class="ln" style="left:-14px;top:1060px;width:100px">166</div>
<div class="abs" style="left:87px;top:1077.5px;width:21px;height:1.4px;background:#a9adb5;"></div>
<div class="ln" style="left:-14px;top:1096px;width:100px">167</div>
<div class="abs" style="left:87px;top:1113.5px;width:21px;height:1.4px;background:#a9adb5;"></div>
<div class="ln" style="left:-14px;top:1132px;width:100px">168</div>
<div class="abs" style="left:87px;top:1149.5px;width:21px;height:1.4px;background:#a9adb5;"></div>
<div class="ln" style="left:-14px;top:1168px;width:100px">169</div>
<div class="abs" style="left:87px;top:1185.5px;width:21px;height:1.4px;background:#a9adb5;"></div>
<div class="ln" style="left:-14px;top:1204px;width:100px">170</div>
<div class="abs" style="left:87px;top:1221.5px;width:21px;height:1.4px;background:#a9adb5;"></div>
<div class="ln" style="left:-14px;top:1240px;width:100px">171</div>
<div class="abs" style="left:87px;top:1257.5px;width:21px;height:1.4px;background:#a9adb5;"></div>
<div class="ln" style="left:-14px;top:1276px;width:100px">172</div>
<div class="abs" style="left:87px;top:1293.5px;width:21px;height:1.4px;background:#a9adb5;"></div>
<div class="ln" style="left:-14px;top:1312px;width:100px">173</div>
<div class="abs" style="left:87px;top:1329.5px;width:21px;height:1.4px;background:#a9adb5;"></div>
<div class="ln" style="left:-14px;top:1348px;width:100px">174</div>
<div class="abs" style="left:87px;top:1365.5px;width:21px;height:1.4px;background:#a9adb5;"></div>
<div class="ln" style="left:-14px;top:1384px;width:100px">175</div>
<div class="abs" style="left:87px;top:1401.5px;width:21px;height:1.4px;background:#a9adb5;"></div>
<div class="ln" style="left:-14px;top:1420px;width:100px">176</div>
<div class="abs" style="left:87px;top:1437.5px;width:21px;height:1.4px;background:#a9adb5;"></div>
<div class="ln" style="left:-14px;top:1456px;width:100px">177</div>
<div class="abs" style="left:87px;top:1473.5px;width:21px;height:1.4px;background:#a9adb5;"></div>
<div class="ln" style="left:-14px;top:1492px;width:100px">178</div>
<div class="abs" style="left:87px;top:1509.5px;width:21px;height:1.4px;background:#a9adb5;"></div>
<div class="ln" style="left:-14px;top:1528px;width:100px">179</div>
<div class="abs" style="left:87px;top:1545.5px;width:21px;height:1.4px;background:#a9adb5;"></div>
<div class="ln" style="left:-14px;top:1564px;width:100px">180</div>
<div class="abs" style="left:87px;top:1581.5px;width:21px;height:1.4px;background:#a9adb5;"></div>
<div class="ln" style="left:-14px;top:1600px;width:100px">181</div>
<div class="abs" style="left:87px;top:1617.5px;width:21px;height:1.4px;background:#a9adb5;"></div>
<div class="ln" style="left:-14px;top:1636px;width:100px">182</div>
<div class="abs" style="left:87px;top:1653.5px;width:21px;height:1.4px;background:#a9adb5;"></div>
<div class="ln" style="left:-14px;top:1672px;width:100px">183</div>
<div class="abs" style="left:87px;top:1689.5px;width:21px;height:1.4px;background:#a9adb5;"></div>
<div class="ln" style="left:-14px;top:1708px;width:100px">184</div>
<div class="abs" style="left:87px;top:1725.5px;width:21px;height:1.4px;background:#a9adb5;"></div>
<div class="ln" style="left:-14px;top:1744px;width:100px">185</div>
<div class="abs" style="left:87px;top:1761.5px;width:21px;height:1.4px;background:#a9adb5;"></div>
<div class="ln" style="left:-14px;top:1780px;width:100px">186</div>
<div class="abs" style="left:87px;top:1797.5px;width:21px;height:1.4px;background:#a9adb5;"></div>
<div class="ln" style="left:-14px;top:1816px;width:100px">187</div>
<div class="ln" style="left:-14px;top:1852px;width:100px">188</div>
<div class="ln" style="left:-14px;top:1888px;width:100px">189</div>
<div class="row" style="top:124px;left:114px;width:1421px"><span class="y">router</span><span class="w">.</span><span class="b">beforeEach</span><span class="o">(</span><span class="k">(</span><span class="i">to</span><span class="w">: </span><span class="y">ToRouteType</span><span class="w">, </span><span class="i">_from</span><span class="w">, </span><span class="i">next</span><span class="k">)    {</span></div>
<svg class="abs" style="left:837.73px;top:124px" width="30" height="36" viewBox="0 0 30 36"><path d="M3 11.5 H21 M3 18.5 H21 M18.5 7 L26.5 15 L18.5 23" fill="none" stroke="#cd88e1" stroke-width="2.2" stroke-linejoin="miter"/></svg>
<div class="row" style="top:160px;left:114px;width:1421px"><span class="w">  </span><span class="k">if </span><span class="c">(</span><span class="y">Cookies</span><span class="w">.</span><span class="b">get</span><span class="o">(</span><span class="r">multipleTabsKey</span><span class="o">) </span><span class="c">&amp;&amp; </span><span class="r">userInfo</span><span class="c">) {</span></div>
<div class="row" style="top:196px;left:114px;width:1421px"><span class="w">    </span><span class="k">if </span><span class="o">(</span><span class="y">_from</span><span class="w">?.</span><span class="r">name</span><span class="o">) {</span></div>
<div class="row" style="top:232px;left:114px;width:1421px"><span class="w">      </span><span class="k">if </span><span class="k">(</span><span class="r">externalLink</span><span class="k">) {</span></div>
<div class="row" style="top:268px;left:114px;width:1421px"><span class="w">        </span><span class="y">NProgress</span><span class="w">.</span><span class="b">done</span><span class="c">()</span><span class="w">;</span></div>
<div class="row" style="top:304px;left:114px;width:1421px"><span class="w">      </span><span class="k">} </span><span class="k">else </span><span class="k">{</span></div>
<div class="row" style="top:340px;left:114px;width:1421px"><span class="w">        </span><span class="b">toCorrectRoute</span><span class="c">()</span><span class="w">;</span></div>
<div class="row" style="top:376px;left:114px;width:1421px"><span class="w">      </span><span class="k">}</span></div>
<div class="row" style="top:412px;left:114px;width:1421px"><span class="w">    </span><span class="o">} </span><span class="k">else </span><span class="o">{</span></div>
<div class="row" style="top:448px;left:114px;width:1421px"><span class="w">      </span><span class="m">// <span class="z">刷新</span></span></div>
<div class="row" style="top:484px;left:114px;width:1421px"><span class="w">      </span><span class="k">if </span><span class="k">(</span></div>
<div class="row" style="top:520px;left:114px;width:1421px"><span class="w">        </span><span class="b">usePermissionStoreHook</span><span class="c">()</span><span class="w">.</span><span class="y">wholeMenus</span><span class="w">.</span><span class="r">length </span><span class="c">    </span><span class="o">0 </span><span class="c">&amp;&amp;</span></div>
<svg class="abs" style="left:867.27px;top:520px" width="45" height="36" viewBox="0 0 45 36"><path d="M1.5 12.5 H43 M1.5 17.5 H43 M1.5 22.5 H43" fill="none" stroke="#6abfca" stroke-width="2"/></svg>
<div class="row" style="top:556px;left:114px;width:1421px"><span class="w">        </span><span class="y">to</span><span class="w">.</span><span class="r">path </span><span class="c">    </span><span class="g">&quot;/login&quot;</span></div>
<svg class="abs" style="left:350.32px;top:556px" width="45" height="36" viewBox="0 0 45 36"><path d="M1.5 12.5 H43 M1.5 17.5 H43 M1.5 22.5 H43 M21 26 L30 8" fill="none" stroke="#6abfca" stroke-width="2"/></svg>
<div class="row" style="top:592px;left:114px;width:1421px"><span class="w">      </span><span class="k">) {</span></div>
<div class="row" style="top:628px;left:114px;width:1421px"><span class="w">        </span><span class="b">initRouter</span><span class="c">()</span><span class="w">.</span><span class="b">then</span><span class="c">(</span><span class="o">(</span><span class="i">router</span><span class="w">: </span><span class="y">Router</span><span class="o">) </span><span class="k">   </span><span class="o">{</span></div>
<svg class="abs" style="left:749.11px;top:628px" width="30" height="36" viewBox="0 0 30 36"><path d="M3 11.5 H21 M3 18.5 H21 M18.5 7 L26.5 15 L18.5 23" fill="none" stroke="#cd88e1" stroke-width="2.2" stroke-linejoin="miter"/></svg>
<div class="row" style="top:736px;left:114px;width:1421px"><span class="w">          </span><span class="k">if </span><span class="k">(</span><span class="c">!</span><span class="b">useMultiTagsStoreHook</span><span class="c">()</span><span class="w">.</span><span class="r">getMultiTagsCache</span><span class="k">) {</span></div>
<div class="row" style="top:772px;left:114px;width:1421px"><span class="w">            </span><span class="k">const </span><span class="c">{ </span><span class="y">path </span><span class="c">} </span><span class="c">= </span><span class="r">to</span><span class="w">;</span></div>
<div class="row" style="top:808px;left:114px;width:1421px"><span class="w">            </span><span class="k">const </span><span class="y">route </span><span class="c">= </span><span class="b">findRouteByPath</span><span class="c">(</span></div>
<div class="row" style="top:844px;left:114px;width:1421px"><span class="w">              </span><span class="r">path</span><span class="w">,</span></div>
<div class="row" style="top:880px;left:114px;width:1421px"><span class="w">              </span><span class="y">router</span><span class="w">.</span><span class="y">options</span><span class="w">.</span><span class="r">routes</span><span class="w">[</span><span class="o">0</span><span class="w">]</span><span class="w">.</span><span class="r">children</span></div>
<div class="row" style="top:916px;left:114px;width:1421px"><span class="w">            </span><span class="c">)</span><span class="w">;</span></div>
<div class="row" style="top:952px;left:114px;width:1421px"><span class="w">            </span><span class="b">getTopMenu</span><span class="c">(</span><span class="o">true</span><span class="c">)</span><span class="w">;</span></div>
<div class="row" style="top:988px;left:114px;width:1421px"><span class="w">            </span><span class="m">// query<span class="z">、</span>params<span class="z">模式路由传参数的标签页不在此处处理</span></span></div>
<div class="row" style="top:1024px;left:114px;width:1421px"><span class="w">            </span><span class="k">if </span><span class="c">(</span><span class="r">route </span><span class="c">&amp;&amp; </span><span class="y">route</span><span class="w">.</span><span class="y">meta</span><span class="w">?.</span><span class="r">title</span><span class="c">) {</span></div>
<div class="row" style="top:1060px;left:114px;width:1421px"><span class="w">              </span><span class="k">if </span><span class="o">(</span><span class="b">isAllEmpty</span><span class="k">(</span><span class="y">route</span><span class="w">.</span><span class="r">parentId</span><span class="k">) </span><span class="c">&amp;&amp; </span><span class="y">route</span><span class="w">.</span><span class="y">meta</span><span class="w">?.</span><span class="r">backstage</span><span class="o">) {</span></div>
<div class="row" style="top:1096px;left:114px;width:1421px"><span class="w">                </span><span class="m">// <span class="z">此处为动态顶级路由（目录）</span></span></div>
<div class="row" style="top:1132px;left:114px;width:1421px"><span class="w">                </span><span class="k">const </span><span class="k">{ </span><span class="y">path</span><span class="w">, </span><span class="y">name</span><span class="w">, </span><span class="y">meta </span><span class="k">} </span><span class="c">= </span><span class="y">route</span><span class="w">.</span><span class="r">children</span><span class="w">[</span><span class="o">0</span><span class="w">];</span></div>
<div class="row" style="top:1168px;left:114px;width:1421px"><span class="w">                </span><span class="b">useMultiTagsStoreHook</span><span class="k">()</span><span class="w">.</span><span class="b">handleTags</span><span class="k">(</span><span class="g">&quot;push&quot;</span><span class="w">, </span><span class="c">{</span></div>
<div class="row" style="top:1204px;left:114px;width:1421px"><span class="w">                  </span><span class="r">path</span><span class="w">,</span></div>
<div class="row" style="top:1240px;left:114px;width:1421px"><span class="w">                  </span><span class="r">name</span><span class="w">,</span></div>
<div class="row" style="top:1276px;left:114px;width:1421px"><span class="w">                  </span><span class="r">meta</span></div>
<div class="row" style="top:1312px;left:114px;width:1421px"><span class="w">                </span><span class="c">}</span><span class="k">)</span><span class="w">;</span></div>
<div class="row" style="top:1348px;left:114px;width:1421px"><span class="w">              </span><span class="o">} </span><span class="k">else </span><span class="o">{</span></div>
<div class="row" style="top:1384px;left:114px;width:1421px"><span class="w">                </span><span class="k">const </span><span class="k">{ </span><span class="y">path</span><span class="w">, </span><span class="y">name</span><span class="w">, </span><span class="y">meta </span><span class="k">} </span><span class="c">= </span><span class="r">route</span><span class="w">;</span></div>
<div class="row" style="top:1420px;left:114px;width:1421px"><span class="w">                </span><span class="b">useMultiTagsStoreHook</span><span class="k">()</span><span class="w">.</span><span class="b">handleTags</span><span class="k">(</span><span class="g">&quot;push&quot;</span><span class="w">, </span><span class="c">{</span></div>
<div class="row" style="top:1456px;left:114px;width:1421px"><span class="w">                  </span><span class="r">path</span><span class="w">,</span></div>
<div class="row" style="top:1492px;left:114px;width:1421px"><span class="w">                  </span><span class="r">name</span><span class="w">,</span></div>
<div class="row" style="top:1528px;left:114px;width:1421px"><span class="w">                  </span><span class="r">meta</span></div>
<div class="row" style="top:1564px;left:114px;width:1421px"><span class="w">                </span><span class="c">}</span><span class="k">)</span><span class="w">;</span></div>
<div class="row" style="top:1600px;left:114px;width:1421px"><span class="w">              </span><span class="o">}</span></div>
<div class="row" style="top:1636px;left:114px;width:1421px"><span class="w">            </span><span class="c">}</span></div>
<div class="row" style="top:1672px;left:114px;width:1421px"><span class="w">          </span><span class="k">}</span></div>
<div class="row" style="top:1708px;left:114px;width:1421px"><span class="w">          </span><span class="m">// <span class="z">确保动态路由完全加入路由列表并且不影响静态路由（注意：动态路由刷新时</span>router.beforeEach<span class="z">可能会触发两次，第一次是空的</span></span></div>
<div class="row" style="top:1744px;left:114px;width:1421px"><span class="w">          </span><span class="k">if </span><span class="k">(</span><span class="b">isAllEmpty</span><span class="c">(</span><span class="y">to</span><span class="w">.</span><span class="r">name</span><span class="c">)</span><span class="k">) </span><span class="y">router</span><span class="w">.</span><span class="b">push</span><span class="k">(</span><span class="y">to</span><span class="w">.</span><span class="r">fullPath</span><span class="k">)</span><span class="w">;</span></div>
<div class="row" style="top:1780px;left:114px;width:1421px"><span class="w">        </span><span class="o">}</span><span class="c">)</span><span class="w">;</span></div>
<div class="row" style="top:1816px;left:114px;width:1421px"><span class="w">      </span><span class="k">}</span></div>
<div class="row" style="top:1852px;left:114px;width:1421px"><span class="w">      </span><span class="b">toCorrectRoute</span><span class="c">()</span><span class="w">;</span></div>
<div class="row" style="top:1888px;left:114px;width:1421px"><span class="w">    </span><span class="o">}</span></div>
<div class="abs" style="left:6px;top:265px;width:1499px;height:4px;background:linear-gradient(rgba(0,0,0,0.08),rgba(0,0,0,0.38));"></div>
<div class="abs" style="left:1712px;top:628px;width:1491px;height:36px;background:#3e4439;"></div>
<div class="abs" style="left:1831.16px;top:628px;width:1371.84px;height:36px;background:#2f5251;"></div>
<div class="abs" style="left:1712px;top:664px;width:1491px;height:36px;background:#3e4439;"></div>
<div class="abs" style="left:1712px;top:664px;width:1491px;height:36px;background:#2f5251;"></div>
<div class="abs" style="left:1712px;top:700px;width:1491px;height:36px;background:#3e4439;"></div>
<div class="abs" style="left:1712px;top:700px;width:339px;height:36px;background:#2f5251;"></div>
<div class="abs" style="left:1712px;top:736px;width:1491px;height:36px;background:#3e4439;"></div>
<div class="abs" style="left:1712px;top:736px;width:6px;height:36px;background:#2f5251;"></div>
<div class="abs" style="left:1712px;top:772px;width:1491px;height:36px;background:#3e4439;"></div>
<div class="abs" style="left:1712px;top:772px;width:6px;height:36px;background:#2f5251;"></div>
<div class="abs" style="left:1712px;top:808px;width:1491px;height:36px;background:#3e4439;"></div>
<div class="abs" style="left:1712px;top:808px;width:6px;height:36px;background:#2f5251;"></div>
<div class="abs" style="left:1712px;top:844px;width:1491px;height:36px;background:#3e4439;"></div>
<div class="abs" style="left:1712px;top:844px;width:6px;height:36px;background:#2f5251;"></div>
<div class="abs" style="left:1712px;top:880px;width:1491px;height:36px;background:#3e4439;"></div>
<div class="abs" style="left:1712px;top:880px;width:6px;height:36px;background:#2f5251;"></div>
<div class="abs" style="left:1712px;top:916px;width:1491px;height:36px;background:#3e4439;"></div>
<div class="abs" style="left:1712px;top:916px;width:6px;height:36px;background:#2f5251;"></div>
<div class="abs" style="left:1712px;top:952px;width:1491px;height:36px;background:#3e4439;"></div>
<div class="abs" style="left:1712px;top:952px;width:6px;height:36px;background:#2f5251;"></div>
<div class="abs" style="left:1712px;top:988px;width:1491px;height:36px;background:#3e4439;"></div>
<div class="abs" style="left:1712px;top:988px;width:6px;height:36px;background:#2f5251;"></div>
<div class="abs" style="left:1712px;top:1024px;width:1491px;height:36px;background:#3e4439;"></div>
<div class="abs" style="left:1712px;top:1024px;width:6px;height:36px;background:#2f5251;"></div>
<div class="abs" style="left:1712px;top:1060px;width:1491px;height:36px;background:#3e4439;"></div>
<div class="abs" style="left:1712px;top:1060px;width:6px;height:36px;background:#2f5251;"></div>
<div class="abs" style="left:1712px;top:1096px;width:1491px;height:36px;background:#3e4439;"></div>
<div class="abs" style="left:1712px;top:1096px;width:6px;height:36px;background:#2f5251;"></div>
<div class="abs" style="left:1712px;top:1132px;width:1491px;height:36px;background:#3e4439;"></div>
<div class="abs" style="left:1712px;top:1132px;width:6px;height:36px;background:#2f5251;"></div>
<div class="abs" style="left:1712px;top:1168px;width:1491px;height:36px;background:#3e4439;"></div>
<div class="abs" style="left:1712px;top:1168px;width:6px;height:36px;background:#2f5251;"></div>
<div class="abs" style="left:1712px;top:1204px;width:1491px;height:36px;background:#3e4439;"></div>
<div class="abs" style="left:1712px;top:1204px;width:6px;height:36px;background:#2f5251;"></div>
<div class="abs" style="left:1712px;top:1240px;width:1491px;height:36px;background:#3e4439;"></div>
<div class="abs" style="left:1712px;top:1240px;width:6px;height:36px;background:#2f5251;"></div>
<div class="abs" style="left:1712px;top:1276px;width:1491px;height:36px;background:#3e4439;"></div>
<div class="abs" style="left:1712px;top:1276px;width:6px;height:36px;background:#2f5251;"></div>
<div class="abs" style="left:1712px;top:1312px;width:1491px;height:36px;background:#3e4439;"></div>
<div class="abs" style="left:1712px;top:1312px;width:6px;height:36px;background:#2f5251;"></div>
<div class="abs" style="left:1712px;top:1348px;width:1491px;height:36px;background:#3e4439;"></div>
<div class="abs" style="left:1712px;top:1348px;width:6px;height:36px;background:#2f5251;"></div>
<div class="abs" style="left:1712px;top:1384px;width:1491px;height:36px;background:#3e4439;"></div>
<div class="abs" style="left:1712px;top:1384px;width:6px;height:36px;background:#2f5251;"></div>
<div class="abs" style="left:1712px;top:1420px;width:1491px;height:36px;background:#3e4439;"></div>
<div class="abs" style="left:1712px;top:1420px;width:6px;height:36px;background:#2f5251;"></div>
<div class="abs" style="left:1712px;top:1456px;width:1491px;height:36px;background:#3e4439;"></div>
<div class="abs" style="left:1712px;top:1456px;width:6px;height:36px;background:#2f5251;"></div>
<div class="abs" style="left:1712px;top:1492px;width:1491px;height:36px;background:#3e4439;"></div>
<div class="abs" style="left:1712px;top:1492px;width:6px;height:36px;background:#2f5251;"></div>
<div class="abs" style="left:1712px;top:1528px;width:1491px;height:36px;background:#3e4439;"></div>
<div class="abs" style="left:1712px;top:1528px;width:6px;height:36px;background:#2f5251;"></div>
<div class="abs" style="left:1712px;top:1564px;width:1491px;height:36px;background:#3e4439;"></div>
<div class="abs" style="left:1712px;top:1564px;width:6px;height:36px;background:#2f5251;"></div>
<div class="abs" style="left:1712px;top:1600px;width:1491px;height:36px;background:#3e4439;"></div>
<div class="abs" style="left:1712px;top:1600px;width:6px;height:36px;background:#2f5251;"></div>
<div class="abs" style="left:1712px;top:1636px;width:1491px;height:36px;background:#3e4439;"></div>
<div class="abs" style="left:1712px;top:1636px;width:6px;height:36px;background:#2f5251;"></div>
<div class="abs" style="left:1712px;top:1672px;width:1491px;height:36px;background:#3e4439;"></div>
<div class="abs" style="left:1712px;top:1672px;width:6px;height:36px;background:#2f5251;"></div>
<div class="abs" style="left:1712px;top:1708px;width:1491px;height:36px;background:#3e4439;"></div>
<div class="abs" style="left:1712px;top:1708px;width:6px;height:36px;background:#2f5251;"></div>
<div class="abs" style="left:1712px;top:1744px;width:1491px;height:36px;background:#3e4439;"></div>
<div class="abs" style="left:1712px;top:1744px;width:6px;height:36px;background:#2f5251;"></div>
<div class="abs hatch" style="left:1712px;top:1780px;width:1491px;height:36px"></div>
<div class="guide" style="left:1712.0px;top:160px;height:36px"></div>
<div class="guide" style="left:1741.5px;top:160px;height:36px"></div>
<div class="guide" style="left:1771.1px;top:160px;height:36px"></div>
<div class="guide" style="left:1712.0px;top:196px;height:36px"></div>
<div class="guide" style="left:1741.5px;top:196px;height:36px"></div>
<div class="guide" style="left:1771.1px;top:196px;height:36px"></div>
<div class="guide" style="left:1712.0px;top:232px;height:36px"></div>
<div class="guide" style="left:1741.5px;top:232px;height:36px"></div>
<div class="guide" style="left:1771.1px;top:232px;height:36px"></div>
<div class="guide" style="left:1800.6px;top:232px;height:36px"></div>
<div class="guide" style="left:1712.0px;top:268px;height:36px"></div>
<div class="guide" style="left:1741.5px;top:268px;height:36px"></div>
<div class="guide" style="left:1771.1px;top:268px;height:36px"></div>
<div class="guide" style="left:1800.6px;top:268px;height:36px"></div>
<div class="guide" style="left:1712.0px;top:304px;height:36px"></div>
<div class="guide" style="left:1741.5px;top:304px;height:36px"></div>
<div class="guide" style="left:1771.1px;top:304px;height:36px"></div>
<div class="guide" style="left:1712.0px;top:340px;height:36px"></div>
<div class="guide" style="left:1741.5px;top:340px;height:36px"></div>
<div class="guide" style="left:1771.1px;top:340px;height:36px"></div>
<div class="guide" style="left:1800.6px;top:340px;height:36px"></div>
<div class="guide" style="left:1712.0px;top:376px;height:36px"></div>
<div class="guide" style="left:1741.5px;top:376px;height:36px"></div>
<div class="guide" style="left:1771.1px;top:376px;height:36px"></div>
<div class="guide" style="left:1712.0px;top:412px;height:36px"></div>
<div class="guide" style="left:1741.5px;top:412px;height:36px"></div>
<div class="guide" style="left:1712.0px;top:448px;height:36px"></div>
<div class="guide" style="left:1741.5px;top:448px;height:36px"></div>
<div class="guide" style="left:1771.1px;top:448px;height:36px"></div>
<div class="guide" style="left:1712.0px;top:484px;height:36px"></div>
<div class="guide" style="left:1741.5px;top:484px;height:36px"></div>
<div class="guide" style="left:1771.1px;top:484px;height:36px"></div>
<div class="guide" style="left:1712.0px;top:520px;height:36px"></div>
<div class="guide" style="left:1741.5px;top:520px;height:36px"></div>
<div class="guide" style="left:1771.1px;top:520px;height:36px"></div>
<div class="guide" style="left:1800.6px;top:520px;height:36px"></div>
<div class="guide" style="left:1712.0px;top:556px;height:36px"></div>
<div class="guide" style="left:1741.5px;top:556px;height:36px"></div>
<div class="guide" style="left:1771.1px;top:556px;height:36px"></div>
<div class="guide" style="left:1800.6px;top:556px;height:36px"></div>
<div class="guide" style="left:1712.0px;top:592px;height:36px"></div>
<div class="guide" style="left:1741.5px;top:592px;height:36px"></div>
<div class="guide" style="left:1771.1px;top:592px;height:36px"></div>
<div class="guide" style="left:1712.0px;top:628px;height:36px"></div>
<div class="guide" style="left:1741.5px;top:628px;height:36px"></div>
<div class="guide" style="left:1771.1px;top:628px;height:36px"></div>
<div class="guide" style="left:1800.6px;top:628px;height:36px"></div>
<div class="guide" style="left:1712.0px;top:664px;height:36px"></div>
<div class="guide" style="left:1741.5px;top:664px;height:36px"></div>
<div class="guide" style="left:1771.1px;top:664px;height:36px"></div>
<div class="guide" style="left:1800.6px;top:664px;height:36px"></div>
<div class="guide" style="left:1712.0px;top:700px;height:36px"></div>
<div class="guide" style="left:1741.5px;top:700px;height:36px"></div>
<div class="guide" style="left:1771.1px;top:700px;height:36px"></div>
<div class="guide" style="left:1800.6px;top:700px;height:36px"></div>
<div class="guide" style="left:1712.0px;top:736px;height:36px"></div>
<div class="guide" style="left:1741.5px;top:736px;height:36px"></div>
<div class="guide" style="left:1771.1px;top:736px;height:36px"></div>
<div class="guide" style="left:1800.6px;top:736px;height:36px"></div>
<div class="guide" style="left:1712.0px;top:772px;height:36px"></div>
<div class="guide" style="left:1741.5px;top:772px;height:36px"></div>
<div class="guide" style="left:1771.1px;top:772px;height:36px"></div>
<div class="guide" style="left:1800.6px;top:772px;height:36px"></div>
<div class="guide" style="left:1830.2px;top:772px;height:36px"></div>
<div class="guide" style="left:1712.0px;top:808px;height:36px"></div>
<div class="guide" style="left:1741.5px;top:808px;height:36px"></div>
<div class="guide" style="left:1771.1px;top:808px;height:36px"></div>
<div class="guide" style="left:1800.6px;top:808px;height:36px"></div>
<div class="guide" style="left:1830.2px;top:808px;height:36px"></div>
<div class="guide" style="left:1712.0px;top:844px;height:36px"></div>
<div class="guide" style="left:1741.5px;top:844px;height:36px"></div>
<div class="guide" style="left:1771.1px;top:844px;height:36px"></div>
<div class="guide" style="left:1800.6px;top:844px;height:36px"></div>
<div class="guide" style="left:1830.2px;top:844px;height:36px"></div>
<div class="guide" style="left:1859.7px;top:844px;height:36px"></div>
<div class="guide" style="left:1712.0px;top:880px;height:36px"></div>
<div class="guide" style="left:1741.5px;top:880px;height:36px"></div>
<div class="guide" style="left:1771.1px;top:880px;height:36px"></div>
<div class="guide" style="left:1800.6px;top:880px;height:36px"></div>
<div class="guide" style="left:1830.2px;top:880px;height:36px"></div>
<div class="guide" style="left:1859.7px;top:880px;height:36px"></div>
<div class="guide" style="left:1712.0px;top:916px;height:36px"></div>
<div class="guide" style="left:1741.5px;top:916px;height:36px"></div>
<div class="guide" style="left:1771.1px;top:916px;height:36px"></div>
<div class="guide" style="left:1800.6px;top:916px;height:36px"></div>
<div class="guide" style="left:1830.2px;top:916px;height:36px"></div>
<div class="guide" style="left:1712.0px;top:952px;height:36px"></div>
<div class="guide" style="left:1741.5px;top:952px;height:36px"></div>
<div class="guide" style="left:1771.1px;top:952px;height:36px"></div>
<div class="guide" style="left:1800.6px;top:952px;height:36px"></div>
<div class="guide" style="left:1830.2px;top:952px;height:36px"></div>
<div class="guide" style="left:1712.0px;top:988px;height:36px"></div>
<div class="guide" style="left:1741.5px;top:988px;height:36px"></div>
<div class="guide" style="left:1771.1px;top:988px;height:36px"></div>
<div class="guide" style="left:1800.6px;top:988px;height:36px"></div>
<div class="guide" style="left:1830.2px;top:988px;height:36px"></div>
<div class="guide" style="left:1712.0px;top:1024px;height:36px"></div>
<div class="guide" style="left:1741.5px;top:1024px;height:36px"></div>
<div class="guide" style="left:1771.1px;top:1024px;height:36px"></div>
<div class="guide" style="left:1800.6px;top:1024px;height:36px"></div>
<div class="guide" style="left:1830.2px;top:1024px;height:36px"></div>
<div class="guide" style="left:1712.0px;top:1060px;height:36px"></div>
<div class="guide" style="left:1741.5px;top:1060px;height:36px"></div>
<div class="guide" style="left:1771.1px;top:1060px;height:36px"></div>
<div class="guide" style="left:1800.6px;top:1060px;height:36px"></div>
<div class="guide" style="left:1830.2px;top:1060px;height:36px"></div>
<div class="guide" style="left:1859.7px;top:1060px;height:36px"></div>
<div class="guide" style="left:1712.0px;top:1096px;height:36px"></div>
<div class="guide" style="left:1741.5px;top:1096px;height:36px"></div>
<div class="guide" style="left:1771.1px;top:1096px;height:36px"></div>
<div class="guide" style="left:1800.6px;top:1096px;height:36px"></div>
<div class="guide" style="left:1830.2px;top:1096px;height:36px"></div>
<div class="guide" style="left:1859.7px;top:1096px;height:36px"></div>
<div class="guide" style="left:1889.2px;top:1096px;height:36px"></div>
<div class="guide" style="left:1712.0px;top:1132px;height:36px"></div>
<div class="guide" style="left:1741.5px;top:1132px;height:36px"></div>
<div class="guide" style="left:1771.1px;top:1132px;height:36px"></div>
<div class="guide" style="left:1800.6px;top:1132px;height:36px"></div>
<div class="guide" style="left:1830.2px;top:1132px;height:36px"></div>
<div class="guide" style="left:1859.7px;top:1132px;height:36px"></div>
<div class="guide" style="left:1889.2px;top:1132px;height:36px"></div>
<div class="guide" style="left:1712.0px;top:1168px;height:36px"></div>
<div class="guide" style="left:1741.5px;top:1168px;height:36px"></div>
<div class="guide" style="left:1771.1px;top:1168px;height:36px"></div>
<div class="guide" style="left:1800.6px;top:1168px;height:36px"></div>
<div class="guide" style="left:1830.2px;top:1168px;height:36px"></div>
<div class="guide" style="left:1859.7px;top:1168px;height:36px"></div>
<div class="guide" style="left:1889.2px;top:1168px;height:36px"></div>
<div class="guide" style="left:1712.0px;top:1204px;height:36px"></div>
<div class="guide" style="left:1741.5px;top:1204px;height:36px"></div>
<div class="guide" style="left:1771.1px;top:1204px;height:36px"></div>
<div class="guide" style="left:1800.6px;top:1204px;height:36px"></div>
<div class="guide" style="left:1830.2px;top:1204px;height:36px"></div>
<div class="guide" style="left:1859.7px;top:1204px;height:36px"></div>
<div class="guide" style="left:1889.2px;top:1204px;height:36px"></div>
<div class="guide" style="left:1918.8px;top:1204px;height:36px"></div>
<div class="guide" style="left:1712.0px;top:1240px;height:36px"></div>
<div class="guide" style="left:1741.5px;top:1240px;height:36px"></div>
<div class="guide" style="left:1771.1px;top:1240px;height:36px"></div>
<div class="guide" style="left:1800.6px;top:1240px;height:36px"></div>
<div class="guide" style="left:1830.2px;top:1240px;height:36px"></div>
<div class="guide" style="left:1859.7px;top:1240px;height:36px"></div>
<div class="guide" style="left:1889.2px;top:1240px;height:36px"></div>
<div class="guide" style="left:1918.8px;top:1240px;height:36px"></div>
<div class="guide" style="left:1712.0px;top:1276px;height:36px"></div>
<div class="guide" style="left:1741.5px;top:1276px;height:36px"></div>
<div class="guide" style="left:1771.1px;top:1276px;height:36px"></div>
<div class="guide" style="left:1800.6px;top:1276px;height:36px"></div>
<div class="guide" style="left:1830.2px;top:1276px;height:36px"></div>
<div class="guide" style="left:1859.7px;top:1276px;height:36px"></div>
<div class="guide" style="left:1889.2px;top:1276px;height:36px"></div>
<div class="guide" style="left:1918.8px;top:1276px;height:36px"></div>
<div class="guide" style="left:1712.0px;top:1312px;height:36px"></div>
<div class="guide" style="left:1741.5px;top:1312px;height:36px"></div>
<div class="guide" style="left:1771.1px;top:1312px;height:36px"></div>
<div class="guide" style="left:1800.6px;top:1312px;height:36px"></div>
<div class="guide" style="left:1830.2px;top:1312px;height:36px"></div>
<div class="guide" style="left:1859.7px;top:1312px;height:36px"></div>
<div class="guide" style="left:1889.2px;top:1312px;height:36px"></div>
<div class="guide" style="left:1712.0px;top:1348px;height:36px"></div>
<div class="guide" style="left:1741.5px;top:1348px;height:36px"></div>
<div class="guide" style="left:1771.1px;top:1348px;height:36px"></div>
<div class="guide" style="left:1800.6px;top:1348px;height:36px"></div>
<div class="guide" style="left:1830.2px;top:1348px;height:36px"></div>
<div class="guide" style="left:1859.7px;top:1348px;height:36px"></div>
<div class="guide" style="left:1712.0px;top:1384px;height:36px"></div>
<div class="guide" style="left:1741.5px;top:1384px;height:36px"></div>
<div class="guide" style="left:1771.1px;top:1384px;height:36px"></div>
<div class="guide" style="left:1800.6px;top:1384px;height:36px"></div>
<div class="guide" style="left:1830.2px;top:1384px;height:36px"></div>
<div class="guide" style="left:1859.7px;top:1384px;height:36px"></div>
<div class="guide" style="left:1889.2px;top:1384px;height:36px"></div>
<div class="guide" style="left:1712.0px;top:1420px;height:36px"></div>
<div class="guide" style="left:1741.5px;top:1420px;height:36px"></div>
<div class="guide" style="left:1771.1px;top:1420px;height:36px"></div>
<div class="guide" style="left:1800.6px;top:1420px;height:36px"></div>
<div class="guide" style="left:1830.2px;top:1420px;height:36px"></div>
<div class="guide" style="left:1859.7px;top:1420px;height:36px"></div>
<div class="guide" style="left:1889.2px;top:1420px;height:36px"></div>
<div class="guide" style="left:1712.0px;top:1456px;height:36px"></div>
<div class="guide" style="left:1741.5px;top:1456px;height:36px"></div>
<div class="guide" style="left:1771.1px;top:1456px;height:36px"></div>
<div class="guide" style="left:1800.6px;top:1456px;height:36px"></div>
<div class="guide" style="left:1830.2px;top:1456px;height:36px"></div>
<div class="guide" style="left:1859.7px;top:1456px;height:36px"></div>
<div class="guide" style="left:1889.2px;top:1456px;height:36px"></div>
<div class="guide" style="left:1918.8px;top:1456px;height:36px"></div>
<div class="guide" style="left:1712.0px;top:1492px;height:36px"></div>
<div class="guide" style="left:1741.5px;top:1492px;height:36px"></div>
<div class="guide" style="left:1771.1px;top:1492px;height:36px"></div>
<div class="guide" style="left:1800.6px;top:1492px;height:36px"></div>
<div class="guide" style="left:1830.2px;top:1492px;height:36px"></div>
<div class="guide" style="left:1859.7px;top:1492px;height:36px"></div>
<div class="guide" style="left:1889.2px;top:1492px;height:36px"></div>
<div class="guide" style="left:1918.8px;top:1492px;height:36px"></div>
<div class="guide" style="left:1712.0px;top:1528px;height:36px"></div>
<div class="guide" style="left:1741.5px;top:1528px;height:36px"></div>
<div class="guide" style="left:1771.1px;top:1528px;height:36px"></div>
<div class="guide" style="left:1800.6px;top:1528px;height:36px"></div>
<div class="guide" style="left:1830.2px;top:1528px;height:36px"></div>
<div class="guide" style="left:1859.7px;top:1528px;height:36px"></div>
<div class="guide" style="left:1889.2px;top:1528px;height:36px"></div>
<div class="guide" style="left:1918.8px;top:1528px;height:36px"></div>
<div class="guide" style="left:1712.0px;top:1564px;height:36px"></div>
<div class="guide" style="left:1741.5px;top:1564px;height:36px"></div>
<div class="guide" style="left:1771.1px;top:1564px;height:36px"></div>
<div class="guide" style="left:1800.6px;top:1564px;height:36px"></div>
<div class="guide" style="left:1830.2px;top:1564px;height:36px"></div>
<div class="guide" style="left:1859.7px;top:1564px;height:36px"></div>
<div class="guide" style="left:1889.2px;top:1564px;height:36px"></div>
<div class="guide" style="left:1712.0px;top:1600px;height:36px"></div>
<div class="guide" style="left:1741.5px;top:1600px;height:36px"></div>
<div class="guide" style="left:1771.1px;top:1600px;height:36px"></div>
<div class="guide" style="left:1800.6px;top:1600px;height:36px"></div>
<div class="guide" style="left:1830.2px;top:1600px;height:36px"></div>
<div class="guide" style="left:1859.7px;top:1600px;height:36px"></div>
<div class="guide" style="left:1712.0px;top:1636px;height:36px"></div>
<div class="guide" style="left:1741.5px;top:1636px;height:36px"></div>
<div class="guide" style="left:1771.1px;top:1636px;height:36px"></div>
<div class="guide" style="left:1800.6px;top:1636px;height:36px"></div>
<div class="guide" style="left:1830.2px;top:1636px;height:36px"></div>
<div class="guide" style="left:1712.0px;top:1672px;height:36px"></div>
<div class="guide" style="left:1741.5px;top:1672px;height:36px"></div>
<div class="guide" style="left:1771.1px;top:1672px;height:36px"></div>
<div class="guide" style="left:1800.6px;top:1672px;height:36px"></div>
<div class="guide" style="left:1712.0px;top:1708px;height:36px"></div>
<div class="guide" style="left:1741.5px;top:1708px;height:36px"></div>
<div class="guide" style="left:1771.1px;top:1708px;height:36px"></div>
<div class="guide" style="left:1800.6px;top:1708px;height:36px"></div>
<div class="guide" style="left:1712.0px;top:1744px;height:36px"></div>
<div class="guide" style="left:1741.5px;top:1744px;height:36px"></div>
<div class="guide" style="left:1771.1px;top:1744px;height:36px"></div>
<div class="guide" style="left:1800.6px;top:1744px;height:36px"></div>
<div class="guide" style="left:1712.0px;top:1816px;height:36px"></div>
<div class="guide" style="left:1741.5px;top:1816px;height:36px"></div>
<div class="guide" style="left:1771.1px;top:1816px;height:36px"></div>
<div class="guide" style="left:1712.0px;top:1852px;height:36px"></div>
<div class="guide" style="left:1741.5px;top:1852px;height:36px"></div>
<div class="guide" style="left:1771.1px;top:1852px;height:36px"></div>
<div class="guide" style="left:1712.0px;top:1888px;height:36px"></div>
<div class="guide" style="left:1741.5px;top:1888px;height:36px"></div>
<div class="ln" style="left:1584px;top:124px;width:100px">109</div>
<div class="ln" style="left:1584px;top:160px;width:100px">143</div>
<div class="ln" style="left:1584px;top:196px;width:100px">144</div>
<div class="ln" style="left:1584px;top:232px;width:100px">145</div>
<div class="ln" style="left:1584px;top:268px;width:100px">146</div>
<div class="ln" style="left:1584px;top:304px;width:100px">147</div>
<div class="ln" style="left:1584px;top:340px;width:100px">148</div>
<div class="ln" style="left:1584px;top:376px;width:100px">149</div>
<div class="ln" style="left:1584px;top:412px;width:100px">150</div>
<div class="ln" style="left:1584px;top:448px;width:100px">151</div>
<div class="ln" style="left:1584px;top:484px;width:100px">152</div>
<div class="ln" style="left:1584px;top:520px;width:100px">153</div>
<div class="ln" style="left:1584px;top:556px;width:100px">154</div>
<div class="ln" style="left:1584px;top:592px;width:100px">155</div>
<div class="ln" style="left:1584px;top:628px;width:100px">156</div>
<div class="abs" style="left:1685px;top:645.5px;width:20px;height:1.4px;background:#b4b8c0;"></div>
<div class="abs" style="left:1694.3px;top:636px;width:1.4px;height:20px;background:#b4b8c0;"></div>
<div class="ln" style="left:1584px;top:664px;width:100px">157</div>
<div class="abs" style="left:1685px;top:681.5px;width:20px;height:1.4px;background:#b4b8c0;"></div>
<div class="abs" style="left:1694.3px;top:672px;width:1.4px;height:20px;background:#b4b8c0;"></div>
<div class="ln" style="left:1584px;top:700px;width:100px">158</div>
<div class="abs" style="left:1685px;top:717.5px;width:20px;height:1.4px;background:#b4b8c0;"></div>
<div class="abs" style="left:1694.3px;top:708px;width:1.4px;height:20px;background:#b4b8c0;"></div>
<div class="ln" style="left:1584px;top:736px;width:100px">159</div>
<div class="abs" style="left:1685px;top:753.5px;width:20px;height:1.4px;background:#b4b8c0;"></div>
<div class="abs" style="left:1694.3px;top:744px;width:1.4px;height:20px;background:#b4b8c0;"></div>
<div class="ln" style="left:1584px;top:772px;width:100px">160</div>
<div class="abs" style="left:1685px;top:789.5px;width:20px;height:1.4px;background:#b4b8c0;"></div>
<div class="abs" style="left:1694.3px;top:780px;width:1.4px;height:20px;background:#b4b8c0;"></div>
<div class="ln" style="left:1584px;top:808px;width:100px">161</div>
<div class="abs" style="left:1685px;top:825.5px;width:20px;height:1.4px;background:#b4b8c0;"></div>
<div class="abs" style="left:1694.3px;top:816px;width:1.4px;height:20px;background:#b4b8c0;"></div>
<div class="ln" style="left:1584px;top:844px;width:100px">162</div>
<div class="abs" style="left:1685px;top:861.5px;width:20px;height:1.4px;background:#b4b8c0;"></div>
<div class="abs" style="left:1694.3px;top:852px;width:1.4px;height:20px;background:#b4b8c0;"></div>
<div class="ln" style="left:1584px;top:880px;width:100px">163</div>
<div class="abs" style="left:1685px;top:897.5px;width:20px;height:1.4px;background:#b4b8c0;"></div>
<div class="abs" style="left:1694.3px;top:888px;width:1.4px;height:20px;background:#b4b8c0;"></div>
<div class="ln" style="left:1584px;top:916px;width:100px">164</div>
<div class="abs" style="left:1685px;top:933.5px;width:20px;height:1.4px;background:#b4b8c0;"></div>
<div class="abs" style="left:1694.3px;top:924px;width:1.4px;height:20px;background:#b4b8c0;"></div>
<div class="ln" style="left:1584px;top:952px;width:100px">165</div>
<div class="abs" style="left:1685px;top:969.5px;width:20px;height:1.4px;background:#b4b8c0;"></div>
<div class="abs" style="left:1694.3px;top:960px;width:1.4px;height:20px;background:#b4b8c0;"></div>
<div class="ln" style="left:1584px;top:988px;width:100px">166</div>
<div class="abs" style="left:1685px;top:1005.5px;width:20px;height:1.4px;background:#b4b8c0;"></div>
<div class="abs" style="left:1694.3px;top:996px;width:1.4px;height:20px;background:#b4b8c0;"></div>
<div class="ln" style="left:1584px;top:1024px;width:100px">167</div>
<div class="abs" style="left:1685px;top:1041.5px;width:20px;height:1.4px;background:#b4b8c0;"></div>
<div class="abs" style="left:1694.3px;top:1032px;width:1.4px;height:20px;background:#b4b8c0;"></div>
<div class="ln" style="left:1584px;top:1060px;width:100px">168</div>
<div class="abs" style="left:1685px;top:1077.5px;width:20px;height:1.4px;background:#b4b8c0;"></div>
<div class="abs" style="left:1694.3px;top:1068px;width:1.4px;height:20px;background:#b4b8c0;"></div>
<div class="ln" style="left:1584px;top:1096px;width:100px">169</div>
<div class="abs" style="left:1685px;top:1113.5px;width:20px;height:1.4px;background:#b4b8c0;"></div>
<div class="abs" style="left:1694.3px;top:1104px;width:1.4px;height:20px;background:#b4b8c0;"></div>
<div class="ln" style="left:1584px;top:1132px;width:100px">170</div>
<div class="abs" style="left:1685px;top:1149.5px;width:20px;height:1.4px;background:#b4b8c0;"></div>
<div class="abs" style="left:1694.3px;top:1140px;width:1.4px;height:20px;background:#b4b8c0;"></div>
<div class="ln" style="left:1584px;top:1168px;width:100px">171</div>
<div class="abs" style="left:1685px;top:1185.5px;width:20px;height:1.4px;background:#b4b8c0;"></div>
<div class="abs" style="left:1694.3px;top:1176px;width:1.4px;height:20px;background:#b4b8c0;"></div>
<div class="ln" style="left:1584px;top:1204px;width:100px">172</div>
<div class="abs" style="left:1685px;top:1221.5px;width:20px;height:1.4px;background:#b4b8c0;"></div>
<div class="abs" style="left:1694.3px;top:1212px;width:1.4px;height:20px;background:#b4b8c0;"></div>
<div class="ln" style="left:1584px;top:1240px;width:100px">173</div>
<div class="abs" style="left:1685px;top:1257.5px;width:20px;height:1.4px;background:#b4b8c0;"></div>
<div class="abs" style="left:1694.3px;top:1248px;width:1.4px;height:20px;background:#b4b8c0;"></div>
<div class="ln" style="left:1584px;top:1276px;width:100px">174</div>
<div class="abs" style="left:1685px;top:1293.5px;width:20px;height:1.4px;background:#b4b8c0;"></div>
<div class="abs" style="left:1694.3px;top:1284px;width:1.4px;height:20px;background:#b4b8c0;"></div>
<div class="ln" style="left:1584px;top:1312px;width:100px">175</div>
<div class="abs" style="left:1685px;top:1329.5px;width:20px;height:1.4px;background:#b4b8c0;"></div>
<div class="abs" style="left:1694.3px;top:1320px;width:1.4px;height:20px;background:#b4b8c0;"></div>
<div class="ln" style="left:1584px;top:1348px;width:100px">176</div>
<div class="abs" style="left:1685px;top:1365.5px;width:20px;height:1.4px;background:#b4b8c0;"></div>
<div class="abs" style="left:1694.3px;top:1356px;width:1.4px;height:20px;background:#b4b8c0;"></div>
<div class="ln" style="left:1584px;top:1384px;width:100px">177</div>
<div class="abs" style="left:1685px;top:1401.5px;width:20px;height:1.4px;background:#b4b8c0;"></div>
<div class="abs" style="left:1694.3px;top:1392px;width:1.4px;height:20px;background:#b4b8c0;"></div>
<div class="ln" style="left:1584px;top:1420px;width:100px">178</div>
<div class="abs" style="left:1685px;top:1437.5px;width:20px;height:1.4px;background:#b4b8c0;"></div>
<div class="abs" style="left:1694.3px;top:1428px;width:1.4px;height:20px;background:#b4b8c0;"></div>
<div class="ln" style="left:1584px;top:1456px;width:100px">179</div>
<div class="abs" style="left:1685px;top:1473.5px;width:20px;height:1.4px;background:#b4b8c0;"></div>
<div class="abs" style="left:1694.3px;top:1464px;width:1.4px;height:20px;background:#b4b8c0;"></div>
<div class="ln" style="left:1584px;top:1492px;width:100px">180</div>
<div class="abs" style="left:1685px;top:1509.5px;width:20px;height:1.4px;background:#b4b8c0;"></div>
<div class="abs" style="left:1694.3px;top:1500px;width:1.4px;height:20px;background:#b4b8c0;"></div>
<div class="ln" style="left:1584px;top:1528px;width:100px">181</div>
<div class="abs" style="left:1685px;top:1545.5px;width:20px;height:1.4px;background:#b4b8c0;"></div>
<div class="abs" style="left:1694.3px;top:1536px;width:1.4px;height:20px;background:#b4b8c0;"></div>
<div class="ln" style="left:1584px;top:1564px;width:100px">182</div>
<div class="abs" style="left:1685px;top:1581.5px;width:20px;height:1.4px;background:#b4b8c0;"></div>
<div class="abs" style="left:1694.3px;top:1572px;width:1.4px;height:20px;background:#b4b8c0;"></div>
<div class="ln" style="left:1584px;top:1600px;width:100px">183</div>
<div class="abs" style="left:1685px;top:1617.5px;width:20px;height:1.4px;background:#b4b8c0;"></div>
<div class="abs" style="left:1694.3px;top:1608px;width:1.4px;height:20px;background:#b4b8c0;"></div>
<div class="ln" style="left:1584px;top:1636px;width:100px">184</div>
<div class="abs" style="left:1685px;top:1653.5px;width:20px;height:1.4px;background:#b4b8c0;"></div>
<div class="abs" style="left:1694.3px;top:1644px;width:1.4px;height:20px;background:#b4b8c0;"></div>
<div class="ln" style="left:1584px;top:1672px;width:100px">185</div>
<div class="abs" style="left:1685px;top:1689.5px;width:20px;height:1.4px;background:#b4b8c0;"></div>
<div class="abs" style="left:1694.3px;top:1680px;width:1.4px;height:20px;background:#b4b8c0;"></div>
<div class="ln" style="left:1584px;top:1708px;width:100px">186</div>
<div class="abs" style="left:1685px;top:1725.5px;width:20px;height:1.4px;background:#b4b8c0;"></div>
<div class="abs" style="left:1694.3px;top:1716px;width:1.4px;height:20px;background:#b4b8c0;"></div>
<div class="ln" style="left:1584px;top:1744px;width:100px">187</div>
<div class="abs" style="left:1685px;top:1761.5px;width:20px;height:1.4px;background:#b4b8c0;"></div>
<div class="abs" style="left:1694.3px;top:1752px;width:1.4px;height:20px;background:#b4b8c0;"></div>
<div class="ln" style="left:1584px;top:1816px;width:100px">188</div>
<div class="ln" style="left:1584px;top:1852px;width:100px">189</div>
<div class="ln" style="left:1584px;top:1888px;width:100px">190</div>
<div class="row" style="top:124px;left:1713px;width:1490px"><span class="y">router</span><span class="w">.</span><span class="b">beforeEach</span><span class="o">(</span><span class="k">(</span><span class="i">to</span><span class="w">: </span><span class="y">ToRouteType</span><span class="w">, </span><span class="i">_from</span><span class="w">, </span><span class="n">next</span><span class="k">)    {</span></div>
<svg class="abs" style="left:2436.73px;top:124px" width="30" height="36" viewBox="0 0 30 36"><path d="M3 11.5 H21 M3 18.5 H21 M18.5 7 L26.5 15 L18.5 23" fill="none" stroke="#cd88e1" stroke-width="2.2" stroke-linejoin="miter"/></svg>
<div class="row" style="top:160px;left:1713px;width:1490px"><span class="w">      </span><span class="m">// name<span class="z">为超链接</span></span></div>
<div class="row" style="top:196px;left:1713px;width:1490px"><span class="w">      </span><span class="k">if </span><span class="k">(</span><span class="y">externalLink</span><span class="k">) {</span></div>
<div class="row" style="top:232px;left:1713px;width:1490px"><span class="w">        </span><span class="b">openLink</span><span class="c">(</span><span class="i">to</span><span class="w">?.</span><span class="r">name </span><span class="k">as </span><span class="y">string</span><span class="c">)</span><span class="w">;</span></div>
<div class="row" style="top:268px;left:1713px;width:1490px"><span class="w">        </span><span class="y">NProgress</span><span class="w">.</span><span class="b">done</span><span class="c">()</span><span class="w">;</span></div>
<div class="row" style="top:304px;left:1713px;width:1490px"><span class="w">      </span><span class="k">} </span><span class="k">else </span><span class="k">{</span></div>
<div class="row" style="top:340px;left:1713px;width:1490px"><span class="w">        </span><span class="b">toCorrectRoute</span><span class="c">()</span><span class="w">;</span></div>
<div class="row" style="top:376px;left:1713px;width:1490px"><span class="w">      </span><span class="k">}</span></div>
<div class="row" style="top:412px;left:1713px;width:1490px"><span class="w">    </span><span class="o">} </span><span class="k">else </span><span class="o">{</span></div>
<div class="row" style="top:448px;left:1713px;width:1490px"><span class="w">      </span><span class="m">// <span class="z">刷新</span></span></div>
<div class="row" style="top:484px;left:1713px;width:1490px"><span class="w">      </span><span class="k">if </span><span class="k">(</span></div>
<div class="row" style="top:520px;left:1713px;width:1490px"><span class="w">        </span><span class="b">usePermissionStoreHook</span><span class="c">()</span><span class="w">.</span><span class="r">wholeMenus</span><span class="w">.</span><span class="r">length </span><span class="c">    </span><span class="o">0 </span><span class="c">&amp;&amp;</span></div>
<svg class="abs" style="left:2466.27px;top:520px" width="45" height="36" viewBox="0 0 45 36"><path d="M1.5 12.5 H43 M1.5 17.5 H43 M1.5 22.5 H43" fill="none" stroke="#6abfca" stroke-width="2"/></svg>
<div class="row" style="top:556px;left:1713px;width:1490px"><span class="w">        </span><span class="i">to</span><span class="w">.</span><span class="r">path </span><span class="c">    </span><span class="g">&quot;/login&quot;</span></div>
<svg class="abs" style="left:1949.32px;top:556px" width="45" height="36" viewBox="0 0 45 36"><path d="M1.5 12.5 H43 M1.5 17.5 H43 M1.5 22.5 H43 M21 26 L30 8" fill="none" stroke="#6abfca" stroke-width="2"/></svg>
<div class="row" style="top:592px;left:1713px;width:1490px"><span class="w">      </span><span class="k">) {</span></div>
<div class="row" style="top:628px;left:1713px;width:1490px"><span class="w">        </span><span class="m">// <span class="z">使用下面方法替换</span>initRouter</span></div>
<div class="row" style="top:664px;left:1713px;width:1490px"><span class="w">        </span><span class="b">usePermissionStoreHook</span><span class="c">()</span><span class="w">.</span><span class="b">handleWholeMenus</span><span class="c">(</span><span class="o">[]</span><span class="c">)</span><span class="w">;</span></div>
<div class="row" style="top:700px;left:1713px;width:1490px"><span class="w">        </span><span class="b">addPathMatch</span><span class="c">()</span><span class="w">;</span></div>
<div class="row" style="top:736px;left:1713px;width:1490px"><span class="w">        </span><span class="k">if </span><span class="c">(</span><span class="c">!</span><span class="b">useMultiTagsStoreHook</span><span class="o">()</span><span class="w">.</span><span class="b">getMultiTagsCache</span><span class="c">) {</span></div>
<div class="row" style="top:772px;left:1713px;width:1490px"><span class="w">          </span><span class="k">const </span><span class="o">{ </span><span class="y">path </span><span class="o">} </span><span class="c">= </span><span class="i">to</span><span class="w">;</span></div>
<div class="row" style="top:808px;left:1713px;width:1490px"><span class="w">          </span><span class="k">const </span><span class="y">route </span><span class="c">= </span><span class="b">findRouteByPath</span><span class="o">(</span></div>
<div class="row" style="top:844px;left:1713px;width:1490px"><span class="w">            </span><span class="y">path</span><span class="w">,</span></div>
<div class="row" style="top:880px;left:1713px;width:1490px"><span class="w">            </span><span class="y">router</span><span class="w">.</span><span class="r">options</span><span class="w">.</span><span class="r">routes</span><span class="o">[0]</span><span class="w">.</span><span class="r">children</span></div>
<div class="row" style="top:916px;left:1713px;width:1490px"><span class="w">          </span><span class="o">)</span><span class="w">;</span></div>
<div class="row" style="top:952px;left:1713px;width:1490px"><span class="w">          </span><span class="b">getTopMenu</span><span class="o">(</span><span class="o">true</span><span class="o">)</span><span class="w">;</span></div>
<div class="row" style="top:988px;left:1713px;width:1490px"><span class="w">          </span><span class="m">// query<span class="z">、</span>params<span class="z">模式路由传参数的标签页不在此处处理</span></span></div>
<div class="row" style="top:1024px;left:1713px;width:1490px"><span class="w">          </span><span class="k">if </span><span class="o">(</span><span class="y">route </span><span class="c">&amp;&amp; </span><span class="y">route</span><span class="w">.</span><span class="y">meta</span><span class="w">?.</span><span class="r">title</span><span class="o">) {</span></div>
<div class="row" style="top:1060px;left:1713px;width:1490px"><span class="w">            </span><span class="k">if </span><span class="k">(</span><span class="b">isAllEmpty</span><span class="c">(</span><span class="y">route</span><span class="w">.</span><span class="r">parentId</span><span class="c">) </span><span class="c">&amp;&amp; </span><span class="y">route</span><span class="w">.</span><span class="y">meta</span><span class="w">?.</span><span class="r">backstage</span><span class="k">) {</span></div>
<div class="row" style="top:1096px;left:1713px;width:1490px"><span class="w">              </span><span class="m">// <span class="z">此处为动态顶级路由（目录）</span></span></div>
<div class="row" style="top:1132px;left:1713px;width:1490px"><span class="w">              </span><span class="k">const </span><span class="c">{ </span><span class="y">path</span><span class="w">, </span><span class="y">name</span><span class="w">, </span><span class="y">meta </span><span class="c">} </span><span class="c">= </span><span class="y">route</span><span class="w">.</span><span class="r">children</span><span class="c">[</span><span class="o">0</span><span class="c">]</span><span class="w">;</span></div>
<div class="row" style="top:1168px;left:1713px;width:1490px"><span class="w">              </span><span class="b">useMultiTagsStoreHook</span><span class="c">()</span><span class="w">.</span><span class="b">handleTags</span><span class="c">(</span><span class="g">&quot;push&quot;</span><span class="w">, </span><span class="o">{</span></div>
<div class="row" style="top:1204px;left:1713px;width:1490px"><span class="w">                </span><span class="r">path</span><span class="w">,</span></div>
<div class="row" style="top:1240px;left:1713px;width:1490px"><span class="w">                </span><span class="r">name</span><span class="w">,</span></div>
<div class="row" style="top:1276px;left:1713px;width:1490px"><span class="w">                </span><span class="r">meta</span></div>
<div class="row" style="top:1312px;left:1713px;width:1490px"><span class="w">              </span><span class="o">}</span><span class="c">)</span><span class="w">;</span></div>
<div class="row" style="top:1348px;left:1713px;width:1490px"><span class="w">            </span><span class="k">} </span><span class="k">else </span><span class="k">{</span></div>
<div class="row" style="top:1384px;left:1713px;width:1490px"><span class="w">              </span><span class="k">const </span><span class="c">{ </span><span class="y">path</span><span class="w">, </span><span class="y">name</span><span class="w">, </span><span class="y">meta </span><span class="c">} </span><span class="c">= </span><span class="y">route</span><span class="w">;</span></div>
<div class="row" style="top:1420px;left:1713px;width:1490px"><span class="w">              </span><span class="b">useMultiTagsStoreHook</span><span class="c">()</span><span class="w">.</span><span class="b">handleTags</span><span class="c">(</span><span class="g">&quot;push&quot;</span><span class="w">, </span><span class="o">{</span></div>
<div class="row" style="top:1456px;left:1713px;width:1490px"><span class="w">                </span><span class="r">path</span><span class="w">,</span></div>
<div class="row" style="top:1492px;left:1713px;width:1490px"><span class="w">                </span><span class="r">name</span><span class="w">,</span></div>
<div class="row" style="top:1528px;left:1713px;width:1490px"><span class="w">                </span><span class="r">meta</span></div>
<div class="row" style="top:1564px;left:1713px;width:1490px"><span class="w">              </span><span class="o">}</span><span class="c">)</span><span class="w">;</span></div>
<div class="row" style="top:1600px;left:1713px;width:1490px"><span class="w">            </span><span class="k">}</span></div>
<div class="row" style="top:1636px;left:1713px;width:1490px"><span class="w">          </span><span class="o">}</span></div>
<div class="row" style="top:1672px;left:1713px;width:1490px"><span class="w">        </span><span class="c">}</span></div>
<div class="row" style="top:1708px;left:1713px;width:1490px"><span class="w">        </span><span class="m">// <span class="z">确保动态路由完全加入路由列表并且不影响静态路由（注意：动态路由刷新时</span>router.beforeEach<span class="z">可能会触发两次，第一次是空的</span></span></div>
<div class="row" style="top:1744px;left:1713px;width:1490px"><span class="w">        </span><span class="k">if </span><span class="c">(</span><span class="b">isAllEmpty</span><span class="o">(</span><span class="i">to</span><span class="w">.</span><span class="r">name</span><span class="o">)</span><span class="c">) </span><span class="y">router</span><span class="w">.</span><span class="b">push</span><span class="c">(</span><span class="i">to</span><span class="w">.</span><span class="r">fullPath</span><span class="c">)</span><span class="w">;</span></div>
<div class="row" style="top:1816px;left:1713px;width:1490px"><span class="w">      </span><span class="k">}</span></div>
<div class="row" style="top:1852px;left:1713px;width:1490px"><span class="w">      </span><span class="b">toCorrectRoute</span><span class="c">()</span><span class="w">;</span></div>
<div class="row" style="top:1888px;left:1713px;width:1490px"><span class="w">    </span><span class="o">}</span></div>
<div class="abs" style="left:1608px;top:157px;width:1569px;height:4px;background:linear-gradient(rgba(0,0,0,0.08),rgba(0,0,0,0.38));"></div>
<div class="abs" style="left:1505px;top:136px;width:7px;height:1788px;background:rgba(255,255,255,0.035);"></div>
<div class="abs" style="left:1529px;top:124px;width:1px;height:1800px;background:rgba(255,255,255,0.04);"></div>
<div class="abs" style="left:1505px;top:121px;width:31px;height:5px;background:#46638f;"></div>
<div class="abs" style="left:1601px;top:124px;width:1px;height:1800px;background:rgba(0,0,0,0.18);"></div>
<div class="abs" style="left:3177px;top:124px;width:2px;height:1800px;background:rgba(255,255,255,0.05);"></div>
<div class="abs" style="left:3177px;top:223px;width:27px;height:5px;background:#4d6ac4;"></div>
<div class="abs" style="left:3204px;top:224px;width:30px;height:8px;background:#b3262e;"></div>
<div class="abs" style="left:3234px;top:224px;width:28px;height:8px;background:#1d6b75;"></div>
<div class="abs" style="left:3203px;top:1233px;width:59px;height:465px;background:rgba(121,129,150,0.25);"></div>
<div class="abs" style="left:3204px;top:1342px;width:31px;height:246px;background:#73303d;"></div>
<div class="abs" style="left:3236px;top:1342px;width:26px;height:254px;background:#2d5a69;"></div>
</body></html>
